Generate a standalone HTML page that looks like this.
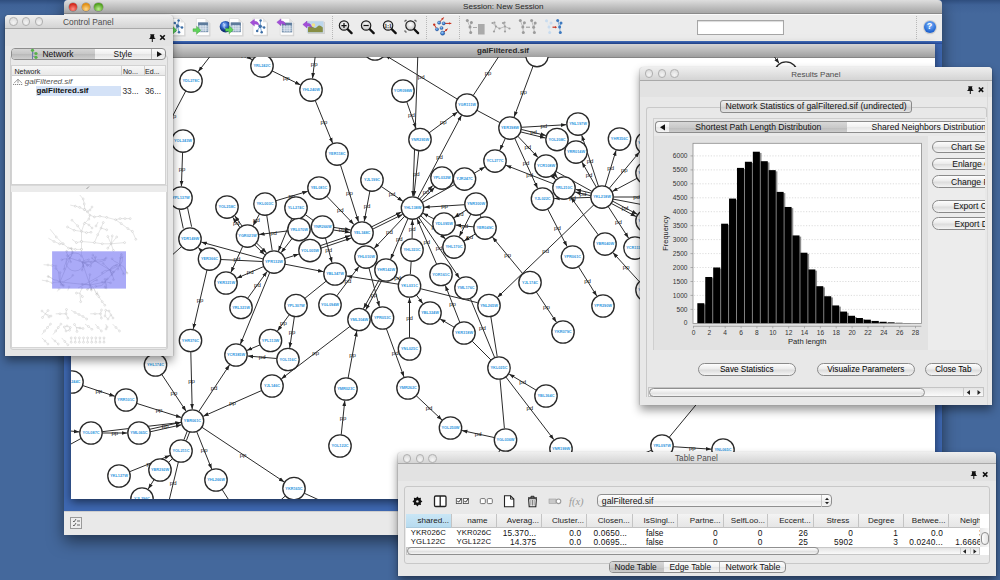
<!DOCTYPE html><html><head><meta charset="utf-8"><style>
*{margin:0;padding:0;box-sizing:border-box}
html,body{width:1000px;height:580px;overflow:hidden}
body{position:relative;font-family:"Liberation Sans",sans-serif;background:#42669b;color:#000}
.a{position:absolute}
.tx{position:absolute;white-space:nowrap;line-height:1}
.tb{background:linear-gradient(#efefef,#d4d4d4);border-bottom:1px solid #a9a9a9}
.tl{position:absolute;width:9px;height:9px;border-radius:50%;border:1px solid #b0b0b0;background:radial-gradient(circle at 50% 70%,#f4f4f4,#d6d6d6)}
.btn{position:absolute;border:1px solid #8a8a8a;border-radius:7px;background:linear-gradient(#fdfdfd,#ececec 45%,#dcdcdc 55%,#f4f4f4);white-space:nowrap;overflow:hidden;color:#111;line-height:1}
.sep{position:absolute;width:0;border-left:1px dotted #b8b8b8}
</style></head><body>
<div class="a" style="left:0;top:0;width:1000px;height:580px;background:linear-gradient(#2f4e7e 0px,#3f6297 5px,#44689c 14px,#44689c 100%)"></div>
<div class="a" style="left:64px;top:0;width:878px;height:535px;background:#3e68b2;box-shadow:0 6px 16px rgba(0,0,0,.5);border-radius:4px 4px 0 0"></div>
<div class="a" style="left:64px;top:0;width:878px;height:14px;background:linear-gradient(#dedede,#c4c4c4 45%,#a6a6a6);border-bottom:1px solid #8a8a8a;border-radius:4px 4px 0 0"></div>
<div class="a" style="left:69.0px;top:2.6px;width:8.4px;height:8.4px;border-radius:50%;background:radial-gradient(circle at 50% 75%,#ff8f85,#d2281c 70%);box-shadow:0 0 0 .5px rgba(0,0,0,.35)"></div>
<div class="a" style="left:81.8px;top:2.6px;width:8.4px;height:8.4px;border-radius:50%;background:radial-gradient(circle at 50% 75%,#ffd98a,#e08d12 70%);box-shadow:0 0 0 .5px rgba(0,0,0,.35)"></div>
<div class="a" style="left:94.3px;top:2.6px;width:8.4px;height:8.4px;border-radius:50%;background:radial-gradient(circle at 50% 75%,#bdf08f,#4f9e1e 70%);box-shadow:0 0 0 .5px rgba(0,0,0,.35)"></div>
<div class="tx" style="left:463px;top:3px;font-size:8.1px;color:#262626;font-weight:normal;">Session: New Session</div>
<div class="a" style="left:64px;top:14px;width:878px;height:27px;background:#ececec;border-top:1px solid #fafafa;border-bottom:1px solid #f7f5ee"></div>
<div class="a" style="left:64px;top:41px;width:878px;height:2.5px;background:linear-gradient(#4674c4,#24489a)"></div>
<div class="a" style="left:64px;top:511px;width:878px;height:24px;background:#e9e9e9;border-top:1px solid #d0d0d0"></div>
<div class="a" style="left:70px;top:517px;width:12px;height:12px;border:1px solid #9a9a9a;background:#eee"></div>
<svg class="a" style="left:70px;top:517px" width="12" height="12"><path d="M3 4l1 1 2-3M7 4h3M3 8l1 1 2-3M7 8h3" stroke="#444" stroke-width=".8" fill="none"/></svg>
<div class="sep" style="left:331.5px;top:16px;height:23px"></div>
<div class="sep" style="left:426px;top:16px;height:23px"></div>
<div class="sep" style="left:458.5px;top:16px;height:23px"></div>
<div class="sep" style="left:916px;top:16px;height:23px"></div>
<div class="a" style="left:697px;top:20px;width:87px;height:15px;background:#fff;border:1px solid #a6a6a6;box-shadow:inset 0 1px 1px rgba(0,0,0,.15)"></div>
<div class="a" style="left:923.5px;top:20.5px;width:12px;height:12px;border-radius:50%;background:radial-gradient(circle at 50% 35%,#7fb8ff,#1f63d0 70%);box-shadow:0 0 0 1px #cfcfcf,0 1px 1px rgba(0,0,0,.3)"></div>
<div class="tx" style="left:926.8px;top:22.3px;font-size:9px;color:#fff;font-weight:bold;">?</div>
<svg class="a" style="left:0;top:0" width="1000" height="45"><path d="M172.5 19.5h9l4 4v13h-13z" fill="#bdbdbd" opacity=".55"/><path d="M171.5 18.5h9l4 4v13h-13z" fill="#fff" stroke="#d2d2d2" stroke-width=".6"/><path d="M180.5 18.5v4h4z" fill="#e2e2e2"/><line x1="177.6" y1="26" x2="178.6" y2="20.5" stroke="#6fa0d8" stroke-width=".9"/><line x1="177.6" y1="26" x2="174.8" y2="23" stroke="#6fa0d8" stroke-width=".9"/><line x1="177.6" y1="26" x2="182" y2="27.6" stroke="#6fa0d8" stroke-width=".9"/><line x1="177.6" y1="26" x2="175" y2="31" stroke="#6fa0d8" stroke-width=".9"/><line x1="177.6" y1="26" x2="179" y2="32.3" stroke="#6fa0d8" stroke-width=".9"/><circle cx="178.6" cy="20.5" r="1.25" fill="#3e6fa6"/><circle cx="174.8" cy="23" r="1.25" fill="#3e6fa6"/><circle cx="182" cy="27.6" r="1.25" fill="#3e6fa6"/><circle cx="175" cy="31" r="1.25" fill="#3e6fa6"/><circle cx="179" cy="32.3" r="1.25" fill="#3e6fa6"/><circle cx="177.6" cy="26" r="1.7" fill="#3e6fa6"/><path d="M169 28.8h3.6v-2.6l4.2 4-4.2 4v-2.6h-3.6z" fill="#5fd35a" stroke="#34a02d" stroke-width=".4"/><path d="M197.4 19.5h9l4 4v13h-13z" fill="#bdbdbd" opacity=".55"/><path d="M196.4 18.5h9l4 4v13h-13z" fill="#fff" stroke="#d2d2d2" stroke-width=".6"/><path d="M205.4 18.5v4h4z" fill="#e2e2e2"/><rect x="198.3" y="22.8" width="9.6" height="9" fill="#a9bdd2" stroke="#5e7c9c" stroke-width=".7"/><rect x="198.3" y="22.8" width="9.6" height="2.2" fill="#5e7c9c"/><line x1="200.7" y1="25.0" x2="200.7" y2="31.8" stroke="#eef3f8" stroke-width=".5"/><line x1="203.1" y1="25.0" x2="203.1" y2="31.8" stroke="#eef3f8" stroke-width=".5"/><line x1="205.5" y1="25.0" x2="205.5" y2="31.8" stroke="#eef3f8" stroke-width=".5"/><line x1="198.3" y1="26.7" x2="207.9" y2="26.7" stroke="#eef3f8" stroke-width=".5"/><line x1="198.3" y1="28.4" x2="207.9" y2="28.4" stroke="#eef3f8" stroke-width=".5"/><line x1="198.3" y1="30.1" x2="207.9" y2="30.1" stroke="#eef3f8" stroke-width=".5"/><path d="M193 28.8h3.6v-2.6l4.2 4-4.2 4v-2.6h-3.6z" fill="#5fd35a" stroke="#34a02d" stroke-width=".4"/><circle cx="225.5" cy="26.7" r="5.8" fill="url(#glb)"/><path d="M223 23q2 1 1 3t2 3" stroke="#d8e6ff" stroke-width=".9" fill="none" opacity=".7"/><path d="M230.5 19.5h9l4 4v13h-13z" fill="#bdbdbd" opacity=".55"/><path d="M229.5 18.5h9l4 4v13h-13z" fill="#fff" stroke="#d2d2d2" stroke-width=".6"/><path d="M238.5 18.5v4h4z" fill="#e2e2e2"/><rect x="231" y="22.8" width="9.6" height="9" fill="#a9bdd2" stroke="#5e7c9c" stroke-width=".7"/><rect x="231" y="22.8" width="9.6" height="2.2" fill="#5e7c9c"/><line x1="233.4" y1="25.0" x2="233.4" y2="31.8" stroke="#eef3f8" stroke-width=".5"/><line x1="235.8" y1="25.0" x2="235.8" y2="31.8" stroke="#eef3f8" stroke-width=".5"/><line x1="238.2" y1="25.0" x2="238.2" y2="31.8" stroke="#eef3f8" stroke-width=".5"/><line x1="231" y1="26.7" x2="240.6" y2="26.7" stroke="#eef3f8" stroke-width=".5"/><line x1="231" y1="28.4" x2="240.6" y2="28.4" stroke="#eef3f8" stroke-width=".5"/><line x1="231" y1="30.1" x2="240.6" y2="30.1" stroke="#eef3f8" stroke-width=".5"/><path d="M225.5 28.400000000000002h3.6v-2.6l4.2 4-4.2 4v-2.6h-3.6z" fill="#5fd35a" stroke="#34a02d" stroke-width=".4"/><path d="M254 19.2h10l4 4v13h-14z" fill="#bdbdbd" opacity=".55"/><path d="M253 18.2h10l4 4v13h-14z" fill="#fff" stroke="#d2d2d2" stroke-width=".6"/><path d="M263 18.2v4h4z" fill="#e2e2e2"/><line x1="260.2" y1="26.2" x2="260.6" y2="20.4" stroke="#6fa0d8" stroke-width=".9"/><line x1="260.2" y1="26.2" x2="264.1" y2="27.6" stroke="#6fa0d8" stroke-width=".9"/><line x1="260.2" y1="26.2" x2="257.2" y2="31" stroke="#6fa0d8" stroke-width=".9"/><line x1="260.2" y1="26.2" x2="261.7" y2="32.3" stroke="#6fa0d8" stroke-width=".9"/><circle cx="260.6" cy="20.4" r="1.25" fill="#3e6fa6"/><circle cx="264.1" cy="27.6" r="1.25" fill="#3e6fa6"/><circle cx="257.2" cy="31" r="1.25" fill="#3e6fa6"/><circle cx="261.7" cy="32.3" r="1.25" fill="#3e6fa6"/><circle cx="260.2" cy="26.2" r="1.7" fill="#3e6fa6"/><path d="M250.2 22.6l4.2-3.4v2.1q4.2-.2 4.6 4.4q-1.4-1.9-4.6-1.6v2z" fill="#a34fd8" stroke="#8030b8" stroke-width=".35"/><path d="M281.2 19.2h9l4 4v13h-13z" fill="#bdbdbd" opacity=".55"/><path d="M280.2 18.2h9l4 4v13h-13z" fill="#fff" stroke="#d2d2d2" stroke-width=".6"/><path d="M289.2 18.2v4h4z" fill="#e2e2e2"/><rect x="282.2" y="23" width="9.6" height="9" fill="#a9bdd2" stroke="#5e7c9c" stroke-width=".7"/><rect x="282.2" y="23" width="9.6" height="2.2" fill="#5e7c9c"/><line x1="284.6" y1="25.2" x2="284.6" y2="32" stroke="#eef3f8" stroke-width=".5"/><line x1="287.0" y1="25.2" x2="287.0" y2="32" stroke="#eef3f8" stroke-width=".5"/><line x1="289.4" y1="25.2" x2="289.4" y2="32" stroke="#eef3f8" stroke-width=".5"/><line x1="282.2" y1="26.9" x2="291.8" y2="26.9" stroke="#eef3f8" stroke-width=".5"/><line x1="282.2" y1="28.6" x2="291.8" y2="28.6" stroke="#eef3f8" stroke-width=".5"/><line x1="282.2" y1="30.3" x2="291.8" y2="30.3" stroke="#eef3f8" stroke-width=".5"/><path d="M276.8 22.3l4.2-3.4v2.1q4.2-.2 4.6 4.4q-1.4-1.9-4.6-1.6v2z" fill="#a34fd8" stroke="#8030b8" stroke-width=".35"/><rect x="308" y="22" width="16.8" height="12" fill="#000" opacity=".15"/><rect x="307" y="21" width="16.8" height="12" fill="#bcd6ec" stroke="#e0e0e0" stroke-width=".6"/><path d="M308 32.2v-4.6q2.4-2.6 5-.6t4.5-.5 5.3 1v4.7z" fill="#878e45"/><circle cx="313.4" cy="25" r="1.8" fill="#f4e184"/><path d="M302.8 24.5l4.2-3.4v2.1q4.2-.2 4.6 4.4q-1.4-1.9-4.6-1.6v2z" fill="#a34fd8" stroke="#8030b8" stroke-width=".35"/><line x1="347.2" y1="28.7" x2="351.6" y2="33.1" stroke="#111" stroke-width="2.3" stroke-linecap="round"/><circle cx="344" cy="25.5" r="4.7" fill="url(#lens)" stroke="#1c1c1c" stroke-width="1.15"/><path d="M341.4 25.5h5.2M344 22.9v5.2" stroke="#111" stroke-width="1.25"/><line x1="369.3" y1="28.7" x2="373.70000000000005" y2="33.1" stroke="#111" stroke-width="2.3" stroke-linecap="round"/><circle cx="366.1" cy="25.5" r="4.7" fill="url(#lens)" stroke="#1c1c1c" stroke-width="1.15"/><path d="M363.5 25.5h5.2" stroke="#111" stroke-width="1.25"/><line x1="391.3" y1="28.7" x2="395.70000000000005" y2="33.1" stroke="#111" stroke-width="2.3" stroke-linecap="round"/><circle cx="388.1" cy="25.5" r="4.7" fill="url(#lens)" stroke="#1c1c1c" stroke-width="1.15"/><text x="388.1" y="27.5" font-size="5.3" text-anchor="middle" font-family="Liberation Serif" font-weight="bold" fill="#222">1:1</text><line x1="413.7" y1="28.7" x2="418.1" y2="33.1" stroke="#111" stroke-width="2.3" stroke-linecap="round"/><circle cx="410.5" cy="25.5" r="4.7" fill="url(#lens)" stroke="#1c1c1c" stroke-width="1.15"/><path d="M405.0 20.3h1.8M405.0 20.3v1.8M416.0 20.3h-1.8M416.0 20.3v1.8M405.0 32v-1.8M405.0 32h1.8" stroke="#333" stroke-width=".8" fill="none"/><line x1="439.1" y1="22.7" x2="443.6" y2="17.5" stroke="#c8321f" stroke-width="1"/><path d="M443.6 17.5L443.0 20.0L441.2 18.4z" fill="#c8321f"/><line x1="443.7" y1="23.4" x2="451.3" y2="23.4" stroke="#c8321f" stroke-width="1"/><path d="M451.3 23.4L449.0 24.6L449.0 22.2z" fill="#c8321f"/><line x1="442.6" y1="33.2" x2="447.5" y2="28.8" stroke="#c8321f" stroke-width="1"/><path d="M447.5 28.8L446.6 31.3L445.0 29.4z" fill="#c8321f"/><line x1="434.2" y1="24.6" x2="437" y2="29.3" stroke="#c8321f" stroke-width="1"/><circle cx="434.2" cy="24.6" r="1.2" fill="#c8321f"/><circle cx="439.1" cy="22.7" r="1.6" fill="url(#bn)" stroke="#204f8f" stroke-width=".4"/><circle cx="443.7" cy="23.4" r="1.6" fill="url(#bn)" stroke="#204f8f" stroke-width=".4"/><circle cx="437" cy="29.3" r="1.6" fill="url(#bn)" stroke="#204f8f" stroke-width=".4"/><circle cx="441.5" cy="28" r="1.6" fill="url(#bn)" stroke="#204f8f" stroke-width=".4"/><circle cx="442.6" cy="33.2" r="2.1" fill="url(#bn)" stroke="#204f8f" stroke-width=".4"/><line x1="467.3" y1="20.6" x2="470" y2="27" stroke="#b0b0b0" stroke-width=".8"/><line x1="471.4" y1="22.4" x2="470" y2="27" stroke="#b0b0b0" stroke-width=".8"/><line x1="470" y1="27" x2="470.7" y2="32.6" stroke="#b0b0b0" stroke-width=".8"/><circle cx="467.3" cy="20.6" r="1.5" fill="#9a9a9a"/><circle cx="471.4" cy="22.4" r="1.5" fill="#9a9a9a"/><circle cx="470" cy="27" r="1.5" fill="#9a9a9a"/><circle cx="470.7" cy="32.6" r="1.5" fill="#9a9a9a"/><rect x="478" y="24" width="6.6" height="10.5" fill="#aaa"/><path d="M473 27.5h4" stroke="#999" stroke-width=".8"/><line x1="492.5" y1="23" x2="496" y2="26.5" stroke="#b0b0b0" stroke-width=".8"/><line x1="494.4" y1="22.5" x2="496" y2="26.5" stroke="#b0b0b0" stroke-width=".8"/><line x1="496" y1="26.5" x2="499.5" y2="28.5" stroke="#b0b0b0" stroke-width=".8"/><line x1="496" y1="26.5" x2="494" y2="31.5" stroke="#b0b0b0" stroke-width=".8"/><line x1="503" y1="23" x2="505" y2="26.5" stroke="#b0b0b0" stroke-width=".8"/><line x1="504.5" y1="22.5" x2="505" y2="26.5" stroke="#b0b0b0" stroke-width=".8"/><line x1="505" y1="26.5" x2="509.5" y2="28.5" stroke="#b0b0b0" stroke-width=".8"/><line x1="505" y1="26.5" x2="505" y2="31.5" stroke="#b0b0b0" stroke-width=".8"/><line x1="499.5" y1="28.5" x2="505" y2="26.5" stroke="#b0b0b0" stroke-width=".8"/><circle cx="492.5" cy="23" r="1.1" fill="#a0a0a0"/><circle cx="494.4" cy="22.5" r="1.1" fill="#a0a0a0"/><circle cx="496" cy="26.5" r="1.1" fill="#a0a0a0"/><circle cx="499.5" cy="28.5" r="1.1" fill="#a0a0a0"/><circle cx="494" cy="31.5" r="1.1" fill="#a0a0a0"/><circle cx="503" cy="23" r="1.1" fill="#a0a0a0"/><circle cx="504.5" cy="22.5" r="1.1" fill="#a0a0a0"/><circle cx="505" cy="26.5" r="1.1" fill="#a0a0a0"/><circle cx="509.5" cy="28.5" r="1.1" fill="#a0a0a0"/><circle cx="505" cy="31.5" r="1.1" fill="#a0a0a0"/><line x1="520.3" y1="20.6" x2="522.8" y2="27" stroke="#b0b0b0" stroke-width=".8"/><line x1="524.4" y1="22.7" x2="522.8" y2="27" stroke="#b0b0b0" stroke-width=".8"/><line x1="522.8" y1="27" x2="523.3" y2="32.4" stroke="#b0b0b0" stroke-width=".8"/><line x1="531.6" y1="20.6" x2="533.6" y2="27.3" stroke="#b0b0b0" stroke-width=".8"/><line x1="535.2" y1="23" x2="533.6" y2="27.3" stroke="#b0b0b0" stroke-width=".8"/><line x1="533.6" y1="27.3" x2="534.4" y2="32.4" stroke="#b0b0b0" stroke-width=".8"/><circle cx="520.3" cy="20.6" r="1.5" fill="#9c9c9c"/><circle cx="524.4" cy="22.7" r="1.5" fill="#9c9c9c"/><circle cx="522.8" cy="27" r="1.5" fill="#9c9c9c"/><circle cx="523.3" cy="32.4" r="1.5" fill="#9c9c9c"/><circle cx="531.6" cy="20.6" r="1.5" fill="#9c9c9c"/><circle cx="535.2" cy="23" r="1.5" fill="#9c9c9c"/><circle cx="533.6" cy="27.3" r="1.5" fill="#9c9c9c"/><circle cx="534.4" cy="32.4" r="1.5" fill="#9c9c9c"/><path d="M526 27.2h4" stroke="#888" stroke-width=".9"/><line x1="546.5" y1="20.7" x2="549" y2="27" stroke="#dde8f3" stroke-width=".8"/><line x1="551" y1="23" x2="549" y2="27" stroke="#dde8f3" stroke-width=".8"/><line x1="549" y1="27" x2="549.7" y2="32.5" stroke="#dde8f3" stroke-width=".8"/><circle cx="546.5" cy="20.7" r="1.5" fill="#c9dcef"/><circle cx="551" cy="23" r="1.5" fill="#c9dcef"/><circle cx="549" cy="27" r="1.5" fill="#c9dcef"/><circle cx="549.7" cy="32.5" r="1.5" fill="#c9dcef"/><line x1="557.7" y1="20.4" x2="559.6" y2="27" stroke="#6f9fd6" stroke-width=".8"/><line x1="561" y1="23" x2="559.6" y2="27" stroke="#6f9fd6" stroke-width=".8"/><line x1="559.6" y1="27" x2="560.3" y2="32.6" stroke="#6f9fd6" stroke-width=".8"/><circle cx="557.7" cy="20.4" r="1.5" fill="#3d79bf"/><circle cx="561" cy="23" r="1.5" fill="#3d79bf"/><circle cx="559.6" cy="27" r="1.5" fill="#3d79bf"/><circle cx="560.3" cy="32.6" r="1.5" fill="#3d79bf"/><path d="M552.5 27.2h3.5" stroke="#c8321f" stroke-width="1.2"/><path d="M557 27.2l-1.8-1.3v2.6z" fill="#c8321f"/><defs><radialGradient id="glb" cx="40%" cy="35%"><stop offset="0" stop-color="#b6d4ff"/><stop offset=".5" stop-color="#3a6fd0"/><stop offset="1" stop-color="#102f7a"/></radialGradient><radialGradient id="lens" cx="50%" cy="40%"><stop offset="0" stop-color="#fff"/><stop offset="1" stop-color="#cdcdcd"/></radialGradient><radialGradient id="bn" cx="40%" cy="35%"><stop offset="0" stop-color="#9fd0ff"/><stop offset="1" stop-color="#2d6cc0"/></radialGradient></defs></svg>
<div class="a" style="left:71px;top:44px;width:864px;height:455px;background:#fff;box-shadow:0 3px 9px rgba(0,0,0,.55)"></div>
<div class="a" style="left:71px;top:44px;width:864px;height:13.5px;background:linear-gradient(#d4d4d4,#bababa 50%,#9f9f9f);border-bottom:1px solid #858585"></div>
<div class="tx" style="left:477px;top:46.6px;font-size:8px;color:#2a2a2a;font-weight:bold;">galFiltered.sif</div>
<svg class="a" style="left:71px;top:57px" width="864" height="442" viewBox="71 57 864 442"><defs><marker id="ar" viewBox="0 0 10 10" refX="10" refY="5" markerWidth="5.5" markerHeight="5.5" orient="auto"><path d="M0 1.5L10 5 0 8.5z" fill="#222"/></marker></defs><line x1="215.0" y1="50.0" x2="198.2" y2="71.7" stroke="#2b2b2b" stroke-width="1" marker-end="url(#ar)"/><line x1="237.0" y1="50.0" x2="252.1" y2="59.7" stroke="#2b2b2b" stroke-width="1" marker-end="url(#ar)"/><line x1="272.1" y1="70.9" x2="300.5" y2="84.9" stroke="#2b2b2b" stroke-width="1" marker-end="url(#ar)"/><line x1="316.0" y1="50.0" x2="312.5" y2="78.4" stroke="#2b2b2b" stroke-width="1" marker-end="url(#ar)"/><line x1="185.8" y1="90.9" x2="160.0" y2="140.0" stroke="#2b2b2b" stroke-width="1"/><line x1="182.6" y1="152.2" x2="181.4" y2="186.3" stroke="#2b2b2b" stroke-width="1" marker-end="url(#ar)"/><line x1="315.2" y1="100.4" x2="332.6" y2="143.2" stroke="#2b2b2b" stroke-width="1" marker-end="url(#ar)"/><line x1="340.4" y1="164.7" x2="358.5" y2="221.8" stroke="#2b2b2b" stroke-width="1" marker-end="url(#ar)"/><line x1="406.7" y1="101.6" x2="416.1" y2="128.5" stroke="#2b2b2b" stroke-width="1" marker-end="url(#ar)"/><line x1="369.9" y1="191.0" x2="364.2" y2="221.5" stroke="#2b2b2b" stroke-width="1" marker-end="url(#ar)"/><line x1="418.0" y1="50.0" x2="412.9" y2="196.3" stroke="#2b2b2b" stroke-width="1" marker-end="url(#ar)"/><line x1="457.4" y1="99.2" x2="385.0" y2="55.1" stroke="#2b2b2b" stroke-width="1" marker-end="url(#ar)"/><line x1="381.2" y1="186.4" x2="402.9" y2="201.3" stroke="#2b2b2b" stroke-width="1" marker-end="url(#ar)"/><line x1="275.7" y1="200.8" x2="307.8" y2="191.3" stroke="#2b2b2b" stroke-width="1" marker-end="url(#ar)"/><line x1="326.7" y1="196.1" x2="353.9" y2="224.5" stroke="#2b2b2b" stroke-width="1" marker-end="url(#ar)"/><line x1="533.1" y1="66.0" x2="514.1" y2="117.0" stroke="#2b2b2b" stroke-width="1" marker-end="url(#ar)"/><line x1="473.1" y1="95.6" x2="503.0" y2="50.0" stroke="#2b2b2b" stroke-width="1"/><line x1="429.0" y1="132.9" x2="457.6" y2="111.9" stroke="#2b2b2b" stroke-width="1" marker-end="url(#ar)"/><line x1="476.9" y1="110.3" x2="499.7" y2="122.5" stroke="#2b2b2b" stroke-width="1"/><line x1="521.2" y1="127.3" x2="566.3" y2="124.7" stroke="#2b2b2b" stroke-width="1" marker-end="url(#ar)"/><line x1="521.2" y1="129.4" x2="545.9" y2="135.5" stroke="#2b2b2b" stroke-width="1" marker-end="url(#ar)"/><line x1="520.6" y1="131.9" x2="545.3" y2="138.0" stroke="#2b2b2b" stroke-width="1" marker-end="url(#ar)"/><line x1="505.4" y1="138.2" x2="499.8" y2="150.3" stroke="#2b2b2b" stroke-width="1" marker-end="url(#ar)"/><line x1="517.7" y1="136.1" x2="538.0" y2="157.5" stroke="#2b2b2b" stroke-width="1" marker-end="url(#ar)"/><line x1="514.7" y1="138.2" x2="537.6" y2="188.4" stroke="#2b2b2b" stroke-width="1" marker-end="url(#ar)"/><line x1="474.1" y1="173.3" x2="484.9" y2="166.9" stroke="#2b2b2b" stroke-width="1" marker-end="url(#ar)"/><line x1="553.6" y1="183.9" x2="505.9" y2="165.3" stroke="#2b2b2b" stroke-width="1" marker-end="url(#ar)"/><line x1="417.7" y1="198.1" x2="461.5" y2="115.3" stroke="#2b2b2b" stroke-width="1" marker-end="url(#ar)"/><line x1="596.4" y1="187.3" x2="581.9" y2="162.1" stroke="#2b2b2b" stroke-width="1" marker-end="url(#ar)"/><line x1="598.5" y1="186.4" x2="581.7" y2="135.1" stroke="#2b2b2b" stroke-width="1" marker-end="url(#ar)"/><line x1="605.2" y1="186.3" x2="616.1" y2="150.2" stroke="#2b2b2b" stroke-width="1" marker-end="url(#ar)"/><line x1="609.2" y1="188.4" x2="639.5" y2="152.0" stroke="#2b2b2b" stroke-width="1" marker-end="url(#ar)"/><line x1="637.1" y1="178.3" x2="612.3" y2="191.5" stroke="#2b2b2b" stroke-width="1" marker-end="url(#ar)"/><line x1="613.2" y1="197.0" x2="660.0" y2="197.0" stroke="#2b2b2b" stroke-width="1"/><line x1="612.5" y1="201.1" x2="637.3" y2="214.3" stroke="#2b2b2b" stroke-width="1" marker-end="url(#ar)"/><line x1="611.3" y1="203.4" x2="636.1" y2="216.6" stroke="#2b2b2b" stroke-width="1" marker-end="url(#ar)"/><line x1="590.8" y1="197.4" x2="554.2" y2="198.6" stroke="#2b2b2b" stroke-width="1" marker-end="url(#ar)"/><line x1="613.0" y1="199.1" x2="660.0" y2="208.0" stroke="#2b2b2b" stroke-width="1"/><line x1="554.1" y1="173.8" x2="557.6" y2="178.1" stroke="#2b2b2b" stroke-width="1" marker-end="url(#ar)"/><line x1="552.1" y1="175.5" x2="555.6" y2="179.8" stroke="#2b2b2b" stroke-width="1" marker-end="url(#ar)"/><line x1="590.8" y1="195.7" x2="575.1" y2="192.0" stroke="#2b2b2b" stroke-width="1" marker-end="url(#ar)"/><line x1="591.4" y1="193.2" x2="575.7" y2="189.4" stroke="#2b2b2b" stroke-width="1" marker-end="url(#ar)"/><line x1="555.8" y1="171.4" x2="591.8" y2="191.3" stroke="#2b2b2b" stroke-width="1"/><line x1="418.8" y1="150.6" x2="413.8" y2="196.4" stroke="#2b2b2b" stroke-width="1" marker-end="url(#ar)"/><line x1="419.4" y1="199.1" x2="432.9" y2="185.4" stroke="#2b2b2b" stroke-width="1" marker-end="url(#ar)"/><line x1="421.3" y1="200.9" x2="434.7" y2="187.3" stroke="#2b2b2b" stroke-width="1" marker-end="url(#ar)"/><line x1="422.3" y1="202.5" x2="454.3" y2="184.7" stroke="#2b2b2b" stroke-width="1"/><line x1="187.6" y1="208.0" x2="191.6" y2="226.7" stroke="#2b2b2b" stroke-width="1"/><line x1="179.3" y1="209.9" x2="183.3" y2="228.5" stroke="#2b2b2b" stroke-width="1"/><line x1="181.7" y1="246.5" x2="150.0" y2="275.0" stroke="#2b2b2b" stroke-width="1"/><line x1="263.2" y1="259.0" x2="201.3" y2="242.1" stroke="#2b2b2b" stroke-width="1" marker-end="url(#ar)"/><line x1="201.7" y1="251.0" x2="198.2" y2="247.4" stroke="#2b2b2b" stroke-width="1" marker-end="url(#ar)"/><line x1="220.7" y1="259.5" x2="262.3" y2="261.5" stroke="#2b2b2b" stroke-width="1"/><line x1="207.0" y1="269.9" x2="193.2" y2="329.1" stroke="#2b2b2b" stroke-width="1" marker-end="url(#ar)"/><line x1="240.0" y1="227.6" x2="232.7" y2="217.3" stroke="#2b2b2b" stroke-width="1" marker-end="url(#ar)"/><line x1="242.1" y1="226.1" x2="234.8" y2="215.8" stroke="#2b2b2b" stroke-width="1" marker-end="url(#ar)"/><line x1="266.7" y1="215.1" x2="272.2" y2="250.4" stroke="#2b2b2b" stroke-width="1"/><line x1="305.1" y1="214.5" x2="313.0" y2="220.2" stroke="#2b2b2b" stroke-width="1"/><line x1="287.9" y1="230.9" x2="259.1" y2="234.5" stroke="#2b2b2b" stroke-width="1" marker-end="url(#ar)"/><line x1="242.8" y1="246.2" x2="230.9" y2="272.4" stroke="#2b2b2b" stroke-width="1" marker-end="url(#ar)"/><line x1="256.4" y1="242.9" x2="266.6" y2="252.9" stroke="#2b2b2b" stroke-width="1" marker-end="url(#ar)"/><line x1="254.6" y1="244.8" x2="264.7" y2="254.7" stroke="#2b2b2b" stroke-width="1" marker-end="url(#ar)"/><line x1="259.6" y1="213.8" x2="253.1" y2="225.7" stroke="#2b2b2b" stroke-width="1" marker-end="url(#ar)"/><line x1="291.8" y1="218.4" x2="278.4" y2="251.2" stroke="#2b2b2b" stroke-width="1" marker-end="url(#ar)"/><line x1="292.2" y1="238.4" x2="281.1" y2="252.7" stroke="#2b2b2b" stroke-width="1" marker-end="url(#ar)"/><line x1="333.8" y1="227.4" x2="350.6" y2="230.0" stroke="#2b2b2b" stroke-width="1" marker-end="url(#ar)"/><line x1="333.4" y1="230.0" x2="350.2" y2="232.5" stroke="#2b2b2b" stroke-width="1" marker-end="url(#ar)"/><line x1="325.4" y1="237.8" x2="332.0" y2="262.7" stroke="#2b2b2b" stroke-width="1" marker-end="url(#ar)"/><line x1="320.2" y1="245.7" x2="350.5" y2="235.5" stroke="#2b2b2b" stroke-width="1" marker-end="url(#ar)"/><line x1="321.0" y1="248.2" x2="351.3" y2="238.0" stroke="#2b2b2b" stroke-width="1" marker-end="url(#ar)"/><line x1="284.7" y1="258.6" x2="298.9" y2="254.1" stroke="#2b2b2b" stroke-width="1" marker-end="url(#ar)"/><line x1="285.0" y1="264.2" x2="323.5" y2="271.7" stroke="#2b2b2b" stroke-width="1" marker-end="url(#ar)"/><line x1="263.7" y1="266.5" x2="236.7" y2="278.3" stroke="#2b2b2b" stroke-width="1" marker-end="url(#ar)"/><line x1="247.6" y1="298.4" x2="267.1" y2="271.5" stroke="#2b2b2b" stroke-width="1" marker-end="url(#ar)"/><line x1="269.8" y1="272.4" x2="240.4" y2="344.2" stroke="#2b2b2b" stroke-width="1" marker-end="url(#ar)"/><line x1="371.5" y1="226.9" x2="401.4" y2="212.0" stroke="#2b2b2b" stroke-width="1" marker-end="url(#ar)"/><line x1="372.6" y1="229.2" x2="402.6" y2="214.4" stroke="#2b2b2b" stroke-width="1" marker-end="url(#ar)"/><line x1="336.7" y1="296.0" x2="359.0" y2="266.4" stroke="#2b2b2b" stroke-width="1" marker-end="url(#ar)"/><line x1="408.1" y1="218.3" x2="390.6" y2="259.2" stroke="#2b2b2b" stroke-width="1" marker-end="url(#ar)"/><line x1="412.1" y1="238.8" x2="412.4" y2="219.7" stroke="#2b2b2b" stroke-width="1" marker-end="url(#ar)"/><line x1="404.8" y1="216.1" x2="374.1" y2="248.5" stroke="#2b2b2b" stroke-width="1" marker-end="url(#ar)"/><line x1="395.3" y1="276.3" x2="399.8" y2="279.4" stroke="#2b2b2b" stroke-width="1"/><line x1="398.4" y1="284.2" x2="346.6" y2="275.9" stroke="#2b2b2b" stroke-width="1" marker-end="url(#ar)"/><line x1="381.8" y1="280.5" x2="365.7" y2="309.9" stroke="#2b2b2b" stroke-width="1" marker-end="url(#ar)"/><line x1="379.5" y1="279.2" x2="363.5" y2="308.6" stroke="#2b2b2b" stroke-width="1" marker-end="url(#ar)"/><line x1="368.9" y1="267.8" x2="379.4" y2="306.7" stroke="#2b2b2b" stroke-width="1" marker-end="url(#ar)"/><line x1="326.3" y1="281.0" x2="305.1" y2="298.1" stroke="#2b2b2b" stroke-width="1"/><line x1="411.2" y1="261.2" x2="410.3" y2="274.3" stroke="#2b2b2b" stroke-width="1"/><line x1="409.5" y1="337.8" x2="409.5" y2="297.7" stroke="#2b2b2b" stroke-width="1" marker-end="url(#ar)"/><line x1="289.4" y1="314.6" x2="277.4" y2="331.0" stroke="#2b2b2b" stroke-width="1" marker-end="url(#ar)"/><line x1="464.8" y1="204.7" x2="424.2" y2="207.3" stroke="#2b2b2b" stroke-width="1" marker-end="url(#ar)"/><line x1="466.5" y1="209.9" x2="453.9" y2="217.8" stroke="#2b2b2b" stroke-width="1" marker-end="url(#ar)"/><line x1="470.9" y1="214.0" x2="459.3" y2="236.6" stroke="#2b2b2b" stroke-width="1" marker-end="url(#ar)"/><line x1="479.9" y1="214.5" x2="480.9" y2="217.0" stroke="#2b2b2b" stroke-width="1"/><line x1="473.9" y1="226.9" x2="455.6" y2="225.1" stroke="#2b2b2b" stroke-width="1" marker-end="url(#ar)"/><line x1="475.5" y1="233.9" x2="464.0" y2="240.9" stroke="#2b2b2b" stroke-width="1" marker-end="url(#ar)"/><line x1="434.0" y1="218.9" x2="422.9" y2="213.3" stroke="#2b2b2b" stroke-width="1" marker-end="url(#ar)"/><line x1="420.7" y1="215.7" x2="445.5" y2="239.0" stroke="#2b2b2b" stroke-width="1" marker-end="url(#ar)"/><line x1="418.7" y1="217.3" x2="459.5" y2="278.3" stroke="#2b2b2b" stroke-width="1" marker-end="url(#ar)"/><line x1="436.6" y1="264.2" x2="417.1" y2="218.8" stroke="#2b2b2b" stroke-width="1" marker-end="url(#ar)"/><line x1="522.9" y1="273.9" x2="492.4" y2="237.0" stroke="#2b2b2b" stroke-width="1" marker-end="url(#ar)"/><line x1="593.9" y1="204.8" x2="497.4" y2="297.4" stroke="#2b2b2b" stroke-width="1" marker-end="url(#ar)"/><line x1="547.6" y1="208.9" x2="567.1" y2="246.6" stroke="#2b2b2b" stroke-width="1" marker-end="url(#ar)"/><line x1="598.4" y1="235.0" x2="570.9" y2="197.4" stroke="#2b2b2b" stroke-width="1" marker-end="url(#ar)"/><line x1="608.1" y1="206.4" x2="628.6" y2="238.2" stroke="#2b2b2b" stroke-width="1" marker-end="url(#ar)"/><line x1="578.4" y1="266.5" x2="596.8" y2="296.1" stroke="#2b2b2b" stroke-width="1" marker-end="url(#ar)"/><line x1="536.2" y1="291.8" x2="556.5" y2="322.3" stroke="#2b2b2b" stroke-width="1" marker-end="url(#ar)"/><line x1="639.4" y1="281.7" x2="612.9" y2="252.6" stroke="#2b2b2b" stroke-width="1" marker-end="url(#ar)"/><line x1="416.3" y1="294.9" x2="422.9" y2="303.7" stroke="#2b2b2b" stroke-width="1" marker-end="url(#ar)"/><line x1="420.4" y1="288.7" x2="477.6" y2="302.7" stroke="#2b2b2b" stroke-width="1"/><line x1="459.9" y1="322.6" x2="445.3" y2="285.4" stroke="#2b2b2b" stroke-width="1" marker-end="url(#ar)"/><line x1="470.3" y1="298.4" x2="494.5" y2="357.2" stroke="#2b2b2b" stroke-width="1"/><line x1="490.8" y1="316.6" x2="497.2" y2="356.4" stroke="#2b2b2b" stroke-width="1"/><line x1="454.3" y1="327.3" x2="440.1" y2="318.9" stroke="#2b2b2b" stroke-width="1" marker-end="url(#ar)"/><line x1="491.1" y1="360.1" x2="472.3" y2="341.3" stroke="#2b2b2b" stroke-width="1"/><line x1="536.4" y1="390.3" x2="509.1" y2="374.0" stroke="#2b2b2b" stroke-width="1" marker-end="url(#ar)"/><line x1="505.8" y1="376.9" x2="553.9" y2="439.7" stroke="#2b2b2b" stroke-width="1" marker-end="url(#ar)"/><line x1="500.0" y1="379.2" x2="504.4" y2="428.3" stroke="#2b2b2b" stroke-width="1"/><line x1="494.6" y1="437.6" x2="461.9" y2="430.5" stroke="#2b2b2b" stroke-width="1" marker-end="url(#ar)"/><line x1="416.2" y1="395.7" x2="442.0" y2="420.0" stroke="#2b2b2b" stroke-width="1" marker-end="url(#ar)"/><line x1="386.3" y1="328.5" x2="404.0" y2="377.0" stroke="#2b2b2b" stroke-width="1" marker-end="url(#ar)"/><line x1="500.1" y1="449.8" x2="470.0" y2="505.0" stroke="#2b2b2b" stroke-width="1"/><line x1="507.9" y1="450.9" x2="520.0" y2="505.0" stroke="#2b2b2b" stroke-width="1"/><line x1="190.8" y1="351.7" x2="192.2" y2="409.3" stroke="#2b2b2b" stroke-width="1" marker-end="url(#ar)"/><line x1="198.7" y1="411.6" x2="229.6" y2="364.8" stroke="#2b2b2b" stroke-width="1" marker-end="url(#ar)"/><line x1="261.7" y1="390.5" x2="203.2" y2="416.3" stroke="#2b2b2b" stroke-width="1" marker-end="url(#ar)"/><line x1="276.8" y1="358.5" x2="247.7" y2="356.0" stroke="#2b2b2b" stroke-width="1" marker-end="url(#ar)"/><line x1="260.2" y1="344.8" x2="246.8" y2="350.5" stroke="#2b2b2b" stroke-width="1" marker-end="url(#ar)"/><line x1="294.4" y1="316.6" x2="289.7" y2="347.9" stroke="#2b2b2b" stroke-width="1" marker-end="url(#ar)"/><line x1="350.1" y1="326.3" x2="281.3" y2="378.9" stroke="#2b2b2b" stroke-width="1" marker-end="url(#ar)"/><line x1="341.2" y1="434.9" x2="344.8" y2="400.6" stroke="#2b2b2b" stroke-width="1" marker-end="url(#ar)"/><line x1="348.1" y1="378.0" x2="356.8" y2="331.0" stroke="#2b2b2b" stroke-width="1" marker-end="url(#ar)"/><line x1="161.7" y1="374.3" x2="186.1" y2="411.2" stroke="#2b2b2b" stroke-width="1" marker-end="url(#ar)"/><line x1="82.6" y1="385.5" x2="114.9" y2="396.3" stroke="#2b2b2b" stroke-width="1" marker-end="url(#ar)"/><line x1="136.7" y1="403.4" x2="181.3" y2="417.5" stroke="#2b2b2b" stroke-width="1" marker-end="url(#ar)"/><line x1="102.2" y1="433.0" x2="127.3" y2="433.0" stroke="#2b2b2b" stroke-width="1" marker-end="url(#ar)"/><line x1="149.6" y1="429.3" x2="180.8" y2="422.3" stroke="#2b2b2b" stroke-width="1" marker-end="url(#ar)"/><line x1="150.2" y1="431.8" x2="181.4" y2="424.8" stroke="#2b2b2b" stroke-width="1" marker-end="url(#ar)"/><line x1="102.1" y1="431.7" x2="180.9" y2="422.4" stroke="#2b2b2b" stroke-width="1" marker-end="url(#ar)"/><line x1="60.0" y1="430.0" x2="79.4" y2="431.9" stroke="#2b2b2b" stroke-width="1" marker-end="url(#ar)"/><line x1="81.2" y1="438.4" x2="60.0" y2="450.0" stroke="#2b2b2b" stroke-width="1"/><line x1="189.7" y1="431.9" x2="186.4" y2="440.5" stroke="#2b2b2b" stroke-width="1"/><line x1="187.3" y1="431.0" x2="184.0" y2="439.6" stroke="#2b2b2b" stroke-width="1"/><line x1="172.7" y1="458.5" x2="168.7" y2="462.2" stroke="#2b2b2b" stroke-width="1"/><line x1="129.4" y1="471.8" x2="170.1" y2="455.4" stroke="#2b2b2b" stroke-width="1" marker-end="url(#ar)"/><line x1="154.1" y1="479.5" x2="148.2" y2="489.1" stroke="#2b2b2b" stroke-width="1" marker-end="url(#ar)"/><line x1="178.4" y1="461.9" x2="168.0" y2="505.0" stroke="#2b2b2b" stroke-width="1"/><line x1="196.6" y1="431.4" x2="211.7" y2="469.1" stroke="#2b2b2b" stroke-width="1" marker-end="url(#ar)"/><line x1="201.8" y1="427.2" x2="284.3" y2="482.0" stroke="#2b2b2b" stroke-width="1" marker-end="url(#ar)"/><line x1="222.0" y1="489.4" x2="232.0" y2="505.0" stroke="#2b2b2b" stroke-width="1"/><line x1="285.5" y1="495.8" x2="275.0" y2="505.0" stroke="#2b2b2b" stroke-width="1"/><line x1="304.2" y1="493.2" x2="330.0" y2="505.0" stroke="#2b2b2b" stroke-width="1"/><line x1="669.1" y1="437.4" x2="700.0" y2="400.0" stroke="#2b2b2b" stroke-width="1" marker-end="url(#ar)"/><line x1="768.0" y1="48.0" x2="779.2" y2="63.5" stroke="#2b2b2b" stroke-width="1" marker-end="url(#ar)"/><line x1="673.2" y1="446.7" x2="711.3" y2="449.2" stroke="#2b2b2b" stroke-width="1" marker-end="url(#ar)"/><line x1="651.6" y1="450.2" x2="640.0" y2="455.0" stroke="#2b2b2b" stroke-width="1"/><text x="244.6" y="56.8" font-size="6" font-family="Liberation Sans" text-anchor="middle" fill="#1a1a1a">pp</text><text x="286.3" y="79.9" font-size="6" font-family="Liberation Sans" text-anchor="middle" fill="#1a1a1a">pp</text><text x="314.2" y="66.2" font-size="6" font-family="Liberation Sans" text-anchor="middle" fill="#1a1a1a">pp</text><text x="172.9" y="117.5" font-size="6" font-family="Liberation Sans" text-anchor="middle" fill="#1a1a1a">pp</text><text x="182.0" y="171.3" font-size="6" font-family="Liberation Sans" text-anchor="middle" fill="#1a1a1a">pp</text><text x="323.9" y="123.8" font-size="6" font-family="Liberation Sans" text-anchor="middle" fill="#1a1a1a">pp</text><text x="349.4" y="195.3" font-size="6" font-family="Liberation Sans" text-anchor="middle" fill="#1a1a1a">pp</text><text x="411.4" y="117.0" font-size="6" font-family="Liberation Sans" text-anchor="middle" fill="#1a1a1a">pd</text><text x="367.0" y="208.3" font-size="6" font-family="Liberation Sans" text-anchor="middle" fill="#1a1a1a">pd</text><text x="421.2" y="79.1" font-size="6" font-family="Liberation Sans" text-anchor="middle" fill="#1a1a1a">pd</text><text x="392.0" y="195.9" font-size="6" font-family="Liberation Sans" text-anchor="middle" fill="#1a1a1a">pd</text><text x="291.8" y="198.1" font-size="6" font-family="Liberation Sans" text-anchor="middle" fill="#1a1a1a">pp</text><text x="340.3" y="212.3" font-size="6" font-family="Liberation Sans" text-anchor="middle" fill="#1a1a1a">pd</text><text x="523.6" y="93.5" font-size="6" font-family="Liberation Sans" text-anchor="middle" fill="#1a1a1a">pp</text><text x="488.1" y="74.8" font-size="6" font-family="Liberation Sans" text-anchor="middle" fill="#1a1a1a">pp</text><text x="443.3" y="124.4" font-size="6" font-family="Liberation Sans" text-anchor="middle" fill="#1a1a1a">pp</text><text x="543.8" y="128.0" font-size="6" font-family="Liberation Sans" text-anchor="middle" fill="#1a1a1a">pd</text><text x="533.6" y="134.4" font-size="6" font-family="Liberation Sans" text-anchor="middle" fill="#1a1a1a">pd</text><text x="527.8" y="148.8" font-size="6" font-family="Liberation Sans" text-anchor="middle" fill="#1a1a1a">pd</text><text x="526.1" y="165.3" font-size="6" font-family="Liberation Sans" text-anchor="middle" fill="#1a1a1a">pd</text><text x="529.7" y="176.6" font-size="6" font-family="Liberation Sans" text-anchor="middle" fill="#1a1a1a">pd</text><text x="439.6" y="158.7" font-size="6" font-family="Liberation Sans" text-anchor="middle" fill="#1a1a1a">pd</text><text x="589.1" y="176.7" font-size="6" font-family="Liberation Sans" text-anchor="middle" fill="#1a1a1a">pd</text><text x="590.1" y="162.7" font-size="6" font-family="Liberation Sans" text-anchor="middle" fill="#1a1a1a">pd</text><text x="610.7" y="170.2" font-size="6" font-family="Liberation Sans" text-anchor="middle" fill="#1a1a1a">pd</text><text x="624.3" y="172.2" font-size="6" font-family="Liberation Sans" text-anchor="middle" fill="#1a1a1a">pp</text><text x="636.6" y="199.0" font-size="6" font-family="Liberation Sans" text-anchor="middle" fill="#1a1a1a">pd</text><text x="624.9" y="209.7" font-size="6" font-family="Liberation Sans" text-anchor="middle" fill="#1a1a1a">pd</text><text x="572.5" y="200.0" font-size="6" font-family="Liberation Sans" text-anchor="middle" fill="#1a1a1a">pd</text><text x="582.9" y="195.8" font-size="6" font-family="Liberation Sans" text-anchor="middle" fill="#1a1a1a">pd</text><text x="416.3" y="175.5" font-size="6" font-family="Liberation Sans" text-anchor="middle" fill="#1a1a1a">pd</text><text x="426.1" y="194.3" font-size="6" font-family="Liberation Sans" text-anchor="middle" fill="#1a1a1a">pd</text><text x="165.8" y="262.7" font-size="6" font-family="Liberation Sans" text-anchor="middle" fill="#1a1a1a">p</text><text x="200.1" y="301.5" font-size="6" font-family="Liberation Sans" text-anchor="middle" fill="#1a1a1a">pp</text><text x="236.3" y="224.5" font-size="6" font-family="Liberation Sans" text-anchor="middle" fill="#1a1a1a">pd</text><text x="273.5" y="234.7" font-size="6" font-family="Liberation Sans" text-anchor="middle" fill="#1a1a1a">pd</text><text x="236.9" y="261.3" font-size="6" font-family="Liberation Sans" text-anchor="middle" fill="#1a1a1a">pd</text><text x="256.4" y="221.8" font-size="6" font-family="Liberation Sans" text-anchor="middle" fill="#1a1a1a">pd</text><text x="342.2" y="230.7" font-size="6" font-family="Liberation Sans" text-anchor="middle" fill="#1a1a1a">pp</text><text x="328.7" y="252.3" font-size="6" font-family="Liberation Sans" text-anchor="middle" fill="#1a1a1a">pd</text><text x="250.2" y="274.4" font-size="6" font-family="Liberation Sans" text-anchor="middle" fill="#1a1a1a">pd</text><text x="257.4" y="287.0" font-size="6" font-family="Liberation Sans" text-anchor="middle" fill="#1a1a1a">pd</text><text x="347.9" y="283.2" font-size="6" font-family="Liberation Sans" text-anchor="middle" fill="#1a1a1a">pd</text><text x="399.3" y="240.8" font-size="6" font-family="Liberation Sans" text-anchor="middle" fill="#1a1a1a">pd</text><text x="412.2" y="231.2" font-size="6" font-family="Liberation Sans" text-anchor="middle" fill="#1a1a1a">pd</text><text x="389.4" y="234.3" font-size="6" font-family="Liberation Sans" text-anchor="middle" fill="#1a1a1a">pd</text><text x="397.5" y="279.9" font-size="6" font-family="Liberation Sans" text-anchor="middle" fill="#1a1a1a">pd</text><text x="373.8" y="297.2" font-size="6" font-family="Liberation Sans" text-anchor="middle" fill="#1a1a1a">pp</text><text x="409.5" y="319.8" font-size="6" font-family="Liberation Sans" text-anchor="middle" fill="#1a1a1a">pd</text><text x="283.4" y="324.8" font-size="6" font-family="Liberation Sans" text-anchor="middle" fill="#1a1a1a">pp</text><text x="444.5" y="208.0" font-size="6" font-family="Liberation Sans" text-anchor="middle" fill="#1a1a1a">pp</text><text x="460.2" y="215.9" font-size="6" font-family="Liberation Sans" text-anchor="middle" fill="#1a1a1a">pd</text><text x="464.7" y="228.0" font-size="6" font-family="Liberation Sans" text-anchor="middle" fill="#1a1a1a">pd</text><text x="469.7" y="239.4" font-size="6" font-family="Liberation Sans" text-anchor="middle" fill="#1a1a1a">pd</text><text x="433.1" y="229.3" font-size="6" font-family="Liberation Sans" text-anchor="middle" fill="#1a1a1a">p</text><text x="439.1" y="249.8" font-size="6" font-family="Liberation Sans" text-anchor="middle" fill="#1a1a1a">pd</text><text x="426.8" y="243.5" font-size="6" font-family="Liberation Sans" text-anchor="middle" fill="#1a1a1a">pd</text><text x="507.7" y="257.4" font-size="6" font-family="Liberation Sans" text-anchor="middle" fill="#1a1a1a">pp</text><text x="545.7" y="253.1" font-size="6" font-family="Liberation Sans" text-anchor="middle" fill="#1a1a1a">pd</text><text x="557.4" y="229.8" font-size="6" font-family="Liberation Sans" text-anchor="middle" fill="#1a1a1a">pd</text><text x="618.4" y="224.3" font-size="6" font-family="Liberation Sans" text-anchor="middle" fill="#1a1a1a">pd</text><text x="587.6" y="283.3" font-size="6" font-family="Liberation Sans" text-anchor="middle" fill="#1a1a1a">pd</text><text x="546.4" y="309.0" font-size="6" font-family="Liberation Sans" text-anchor="middle" fill="#1a1a1a">pp</text><text x="626.2" y="269.2" font-size="6" font-family="Liberation Sans" text-anchor="middle" fill="#1a1a1a">pp</text><text x="452.6" y="306.0" font-size="6" font-family="Liberation Sans" text-anchor="middle" fill="#1a1a1a">pp</text><text x="482.4" y="329.8" font-size="6" font-family="Liberation Sans" text-anchor="middle" fill="#1a1a1a">pd</text><text x="522.7" y="384.1" font-size="6" font-family="Liberation Sans" text-anchor="middle" fill="#1a1a1a">pd</text><text x="529.8" y="410.3" font-size="6" font-family="Liberation Sans" text-anchor="middle" fill="#1a1a1a">pd</text><text x="478.2" y="436.1" font-size="6" font-family="Liberation Sans" text-anchor="middle" fill="#1a1a1a">pd</text><text x="429.1" y="409.8" font-size="6" font-family="Liberation Sans" text-anchor="middle" fill="#1a1a1a">pd</text><text x="395.2" y="354.8" font-size="6" font-family="Liberation Sans" text-anchor="middle" fill="#1a1a1a">pd</text><text x="191.5" y="382.5" font-size="6" font-family="Liberation Sans" text-anchor="middle" fill="#1a1a1a">pp</text><text x="214.1" y="390.2" font-size="6" font-family="Liberation Sans" text-anchor="middle" fill="#1a1a1a">pd</text><text x="232.5" y="405.4" font-size="6" font-family="Liberation Sans" text-anchor="middle" fill="#1a1a1a">pp</text><text x="262.2" y="359.3" font-size="6" font-family="Liberation Sans" text-anchor="middle" fill="#1a1a1a">pd</text><text x="292.0" y="334.3" font-size="6" font-family="Liberation Sans" text-anchor="middle" fill="#1a1a1a">pp</text><text x="315.7" y="354.6" font-size="6" font-family="Liberation Sans" text-anchor="middle" fill="#1a1a1a">pp</text><text x="343.0" y="419.7" font-size="6" font-family="Liberation Sans" text-anchor="middle" fill="#1a1a1a">pp</text><text x="352.5" y="356.5" font-size="6" font-family="Liberation Sans" text-anchor="middle" fill="#1a1a1a">pp</text><text x="173.9" y="394.8" font-size="6" font-family="Liberation Sans" text-anchor="middle" fill="#1a1a1a">pp</text><text x="98.8" y="392.9" font-size="6" font-family="Liberation Sans" text-anchor="middle" fill="#1a1a1a">pp</text><text x="159.0" y="412.4" font-size="6" font-family="Liberation Sans" text-anchor="middle" fill="#1a1a1a">pp</text><text x="114.8" y="435.0" font-size="6" font-family="Liberation Sans" text-anchor="middle" fill="#1a1a1a">pp</text><text x="165.2" y="427.8" font-size="6" font-family="Liberation Sans" text-anchor="middle" fill="#1a1a1a">pp</text><text x="149.8" y="465.6" font-size="6" font-family="Liberation Sans" text-anchor="middle" fill="#1a1a1a">pp</text><text x="173.2" y="485.4" font-size="6" font-family="Liberation Sans" text-anchor="middle" fill="#1a1a1a">pd</text><text x="204.2" y="452.3" font-size="6" font-family="Liberation Sans" text-anchor="middle" fill="#1a1a1a">pp</text><text x="243.0" y="456.6" font-size="6" font-family="Liberation Sans" text-anchor="middle" fill="#1a1a1a">pp</text><text x="692.3" y="450.0" font-size="6" font-family="Liberation Sans" text-anchor="middle" fill="#1a1a1a">pp</text><circle cx="191" cy="81" r="11.2" fill="#fff" stroke="#2a2a2a" stroke-width="1.35"/><text x="191" y="82.4" font-size="3.85" font-family="Liberation Sans" font-weight="bold" text-anchor="middle" fill="#2f97de">YDL278C</text><circle cx="262" cy="66" r="11.2" fill="#fff" stroke="#2a2a2a" stroke-width="1.35"/><text x="262" y="67.4" font-size="3.85" font-family="Liberation Sans" font-weight="bold" text-anchor="middle" fill="#2f97de">YRL242C</text><circle cx="311" cy="90" r="11.2" fill="#fff" stroke="#2a2a2a" stroke-width="1.35"/><text x="311" y="91.4" font-size="3.85" font-family="Liberation Sans" font-weight="bold" text-anchor="middle" fill="#2f97de">YHL240W</text><circle cx="403" cy="91" r="11.2" fill="#fff" stroke="#2a2a2a" stroke-width="1.35"/><text x="403" y="92.4" font-size="3.85" font-family="Liberation Sans" font-weight="bold" text-anchor="middle" fill="#2f97de">YOR098W</text><circle cx="183" cy="141" r="11.2" fill="#fff" stroke="#2a2a2a" stroke-width="1.35"/><text x="183" y="142.4" font-size="3.85" font-family="Liberation Sans" font-weight="bold" text-anchor="middle" fill="#2f97de">YOL243W</text><circle cx="337" cy="154" r="11.2" fill="#fff" stroke="#2a2a2a" stroke-width="1.35"/><text x="337" y="155.4" font-size="3.85" font-family="Liberation Sans" font-weight="bold" text-anchor="middle" fill="#2f97de">YER118C</text><circle cx="372" cy="180" r="11.2" fill="#fff" stroke="#2a2a2a" stroke-width="1.35"/><text x="372" y="181.4" font-size="3.85" font-family="Liberation Sans" font-weight="bold" text-anchor="middle" fill="#2f97de">YJL199C</text><circle cx="319" cy="188" r="11.2" fill="#fff" stroke="#2a2a2a" stroke-width="1.35"/><text x="319" y="189.4" font-size="3.85" font-family="Liberation Sans" font-weight="bold" text-anchor="middle" fill="#2f97de">YEL081C</text><circle cx="181" cy="198" r="11.2" fill="#fff" stroke="#2a2a2a" stroke-width="1.35"/><text x="181" y="199.4" font-size="3.85" font-family="Liberation Sans" font-weight="bold" text-anchor="middle" fill="#2f97de">YPL137W</text><circle cx="375" cy="49" r="11.2" fill="#fff" stroke="#2a2a2a" stroke-width="1.35"/><text x="375" y="50.4" font-size="3.85" font-family="Liberation Sans" font-weight="bold" text-anchor="middle" fill="#2f97de">YHR198W</text><circle cx="420" cy="139.5" r="11.2" fill="#fff" stroke="#2a2a2a" stroke-width="1.35"/><text x="420" y="140.9" font-size="3.85" font-family="Liberation Sans" font-weight="bold" text-anchor="middle" fill="#2f97de">YNR295W</text><circle cx="537" cy="55.5" r="11.2" fill="#fff" stroke="#2a2a2a" stroke-width="1.35"/><text x="537" y="56.9" font-size="3.85" font-family="Liberation Sans" font-weight="bold" text-anchor="middle" fill="#2f97de">YGL049C</text><circle cx="467" cy="105" r="11.2" fill="#fff" stroke="#2a2a2a" stroke-width="1.35"/><text x="467" y="106.4" font-size="3.85" font-family="Liberation Sans" font-weight="bold" text-anchor="middle" fill="#2f97de">YGR111W</text><circle cx="510" cy="128" r="11.2" fill="#fff" stroke="#2a2a2a" stroke-width="1.35"/><text x="510" y="129.4" font-size="3.85" font-family="Liberation Sans" font-weight="bold" text-anchor="middle" fill="#2f97de">YER398W</text><circle cx="578" cy="124" r="11.2" fill="#fff" stroke="#2a2a2a" stroke-width="1.35"/><text x="578" y="125.4" font-size="3.85" font-family="Liberation Sans" font-weight="bold" text-anchor="middle" fill="#2f97de">YNL197W</text><circle cx="557" cy="139.5" r="11.2" fill="#fff" stroke="#2a2a2a" stroke-width="1.35"/><text x="557" y="140.9" font-size="3.85" font-family="Liberation Sans" font-weight="bold" text-anchor="middle" fill="#2f97de">YOL208C</text><circle cx="576" cy="152" r="11.2" fill="#fff" stroke="#2a2a2a" stroke-width="1.35"/><text x="576" y="153.4" font-size="3.85" font-family="Liberation Sans" font-weight="bold" text-anchor="middle" fill="#2f97de">YRR014W</text><circle cx="619.5" cy="139" r="11.2" fill="#fff" stroke="#2a2a2a" stroke-width="1.35"/><text x="619.5" y="140.4" font-size="3.85" font-family="Liberation Sans" font-weight="bold" text-anchor="middle" fill="#2f97de">YHR356C</text><circle cx="495" cy="161" r="11.2" fill="#fff" stroke="#2a2a2a" stroke-width="1.35"/><text x="495" y="162.4" font-size="3.85" font-family="Liberation Sans" font-weight="bold" text-anchor="middle" fill="#2f97de">YCL277C</text><circle cx="546" cy="166" r="11.2" fill="#fff" stroke="#2a2a2a" stroke-width="1.35"/><text x="546" y="167.4" font-size="3.85" font-family="Liberation Sans" font-weight="bold" text-anchor="middle" fill="#2f97de">YCR108W</text><circle cx="442" cy="178" r="11.2" fill="#fff" stroke="#2a2a2a" stroke-width="1.35"/><text x="442" y="179.4" font-size="3.85" font-family="Liberation Sans" font-weight="bold" text-anchor="middle" fill="#2f97de">YPL032W</text><circle cx="464.5" cy="179" r="11.2" fill="#fff" stroke="#2a2a2a" stroke-width="1.35"/><text x="464.5" y="180.4" font-size="3.85" font-family="Liberation Sans" font-weight="bold" text-anchor="middle" fill="#2f97de">YJR247C</text><circle cx="564" cy="188" r="11.2" fill="#fff" stroke="#2a2a2a" stroke-width="1.35"/><text x="564" y="189.4" font-size="3.85" font-family="Liberation Sans" font-weight="bold" text-anchor="middle" fill="#2f97de">YRL210C</text><circle cx="602" cy="197" r="11.2" fill="#fff" stroke="#2a2a2a" stroke-width="1.35"/><text x="602" y="198.4" font-size="3.85" font-family="Liberation Sans" font-weight="bold" text-anchor="middle" fill="#2f97de">YKL218W</text><circle cx="542.5" cy="199" r="11.2" fill="#fff" stroke="#2a2a2a" stroke-width="1.35"/><text x="542.5" y="200.4" font-size="3.85" font-family="Liberation Sans" font-weight="bold" text-anchor="middle" fill="#2f97de">YJL022C</text><circle cx="476" cy="204" r="11.2" fill="#fff" stroke="#2a2a2a" stroke-width="1.35"/><text x="476" y="205.4" font-size="3.85" font-family="Liberation Sans" font-weight="bold" text-anchor="middle" fill="#2f97de">YNR300W</text><circle cx="227" cy="207" r="11.2" fill="#fff" stroke="#2a2a2a" stroke-width="1.35"/><text x="227" y="208.4" font-size="3.85" font-family="Liberation Sans" font-weight="bold" text-anchor="middle" fill="#2f97de">YOL258C</text><circle cx="265" cy="204" r="11.2" fill="#fff" stroke="#2a2a2a" stroke-width="1.35"/><text x="265" y="205.4" font-size="3.85" font-family="Liberation Sans" font-weight="bold" text-anchor="middle" fill="#2f97de">YKL003C</text><circle cx="296" cy="208" r="11.2" fill="#fff" stroke="#2a2a2a" stroke-width="1.35"/><text x="296" y="209.4" font-size="3.85" font-family="Liberation Sans" font-weight="bold" text-anchor="middle" fill="#2f97de">YLL274C</text><circle cx="190" cy="239" r="11.2" fill="#fff" stroke="#2a2a2a" stroke-width="1.35"/><text x="190" y="240.4" font-size="3.85" font-family="Liberation Sans" font-weight="bold" text-anchor="middle" fill="#2f97de">YDR149W</text><circle cx="247.5" cy="236" r="11.2" fill="#fff" stroke="#2a2a2a" stroke-width="1.35"/><text x="247.5" y="237.4" font-size="3.85" font-family="Liberation Sans" font-weight="bold" text-anchor="middle" fill="#2f97de">YGR021W</text><circle cx="299" cy="229.5" r="11.2" fill="#fff" stroke="#2a2a2a" stroke-width="1.35"/><text x="299" y="230.9" font-size="3.85" font-family="Liberation Sans" font-weight="bold" text-anchor="middle" fill="#2f97de">YRL070W</text><circle cx="322.5" cy="227" r="11.2" fill="#fff" stroke="#2a2a2a" stroke-width="1.35"/><text x="322.5" y="228.4" font-size="3.85" font-family="Liberation Sans" font-weight="bold" text-anchor="middle" fill="#2f97de">YNR266W</text><circle cx="362" cy="233" r="11.2" fill="#fff" stroke="#2a2a2a" stroke-width="1.35"/><text x="362" y="234.4" font-size="3.85" font-family="Liberation Sans" font-weight="bold" text-anchor="middle" fill="#2f97de">YEL348C</text><circle cx="412.5" cy="208" r="11.2" fill="#fff" stroke="#2a2a2a" stroke-width="1.35"/><text x="412.5" y="209.4" font-size="3.85" font-family="Liberation Sans" font-weight="bold" text-anchor="middle" fill="#2f97de">YHL138W</text><circle cx="209.5" cy="259" r="11.2" fill="#fff" stroke="#2a2a2a" stroke-width="1.35"/><text x="209.5" y="260.4" font-size="3.85" font-family="Liberation Sans" font-weight="bold" text-anchor="middle" fill="#2f97de">YER366C</text><circle cx="274" cy="262" r="11.2" fill="#fff" stroke="#2a2a2a" stroke-width="1.35"/><text x="274" y="263.4" font-size="3.85" font-family="Liberation Sans" font-weight="bold" text-anchor="middle" fill="#2f97de">YPR132W</text><circle cx="310" cy="250.5" r="11.2" fill="#fff" stroke="#2a2a2a" stroke-width="1.35"/><text x="310" y="251.9" font-size="3.85" font-family="Liberation Sans" font-weight="bold" text-anchor="middle" fill="#2f97de">YOL005W</text><circle cx="366" cy="257" r="11.2" fill="#fff" stroke="#2a2a2a" stroke-width="1.35"/><text x="366" y="258.4" font-size="3.85" font-family="Liberation Sans" font-weight="bold" text-anchor="middle" fill="#2f97de">YHL010W</text><circle cx="412" cy="250" r="11.2" fill="#fff" stroke="#2a2a2a" stroke-width="1.35"/><text x="412" y="251.4" font-size="3.85" font-family="Liberation Sans" font-weight="bold" text-anchor="middle" fill="#2f97de">YHL323C</text><circle cx="226" cy="283" r="11.2" fill="#fff" stroke="#2a2a2a" stroke-width="1.35"/><text x="226" y="284.4" font-size="3.85" font-family="Liberation Sans" font-weight="bold" text-anchor="middle" fill="#2f97de">YKR321W</text><circle cx="335" cy="274" r="11.2" fill="#fff" stroke="#2a2a2a" stroke-width="1.35"/><text x="335" y="275.4" font-size="3.85" font-family="Liberation Sans" font-weight="bold" text-anchor="middle" fill="#2f97de">YBL347W</text><circle cx="386" cy="270" r="11.2" fill="#fff" stroke="#2a2a2a" stroke-width="1.35"/><text x="386" y="271.4" font-size="3.85" font-family="Liberation Sans" font-weight="bold" text-anchor="middle" fill="#2f97de">YHR142W</text><circle cx="409.5" cy="286" r="11.2" fill="#fff" stroke="#2a2a2a" stroke-width="1.35"/><text x="409.5" y="287.4" font-size="3.85" font-family="Liberation Sans" font-weight="bold" text-anchor="middle" fill="#2f97de">YKL031C</text><circle cx="241" cy="307.5" r="11.2" fill="#fff" stroke="#2a2a2a" stroke-width="1.35"/><text x="241" y="308.9" font-size="3.85" font-family="Liberation Sans" font-weight="bold" text-anchor="middle" fill="#2f97de">YRL321W</text><circle cx="296" cy="305.5" r="11.2" fill="#fff" stroke="#2a2a2a" stroke-width="1.35"/><text x="296" y="306.9" font-size="3.85" font-family="Liberation Sans" font-weight="bold" text-anchor="middle" fill="#2f97de">YPL307W</text><circle cx="330" cy="305" r="11.2" fill="#fff" stroke="#2a2a2a" stroke-width="1.35"/><text x="330" y="306.4" font-size="3.85" font-family="Liberation Sans" font-weight="bold" text-anchor="middle" fill="#2f97de">YGL094W</text><circle cx="359" cy="319.5" r="11.2" fill="#fff" stroke="#2a2a2a" stroke-width="1.35"/><text x="359" y="320.9" font-size="3.85" font-family="Liberation Sans" font-weight="bold" text-anchor="middle" fill="#2f97de">YML304W</text><circle cx="382.5" cy="318" r="11.2" fill="#fff" stroke="#2a2a2a" stroke-width="1.35"/><text x="382.5" y="319.4" font-size="3.85" font-family="Liberation Sans" font-weight="bold" text-anchor="middle" fill="#2f97de">YPR053C</text><circle cx="190.5" cy="340.5" r="11.2" fill="#fff" stroke="#2a2a2a" stroke-width="1.35"/><text x="190.5" y="341.9" font-size="3.85" font-family="Liberation Sans" font-weight="bold" text-anchor="middle" fill="#2f97de">YHR376C</text><circle cx="270.5" cy="340.5" r="11.2" fill="#fff" stroke="#2a2a2a" stroke-width="1.35"/><text x="270.5" y="341.9" font-size="3.85" font-family="Liberation Sans" font-weight="bold" text-anchor="middle" fill="#2f97de">YPL113W</text><circle cx="444" cy="224" r="11.2" fill="#fff" stroke="#2a2a2a" stroke-width="1.35"/><text x="444" y="225.4" font-size="3.85" font-family="Liberation Sans" font-weight="bold" text-anchor="middle" fill="#2f97de">YDL095W</text><circle cx="485" cy="228" r="11.2" fill="#fff" stroke="#2a2a2a" stroke-width="1.35"/><text x="485" y="229.4" font-size="3.85" font-family="Liberation Sans" font-weight="bold" text-anchor="middle" fill="#2f97de">YER049C</text><circle cx="454" cy="247" r="11.2" fill="#fff" stroke="#2a2a2a" stroke-width="1.35"/><text x="454" y="248.4" font-size="3.85" font-family="Liberation Sans" font-weight="bold" text-anchor="middle" fill="#2f97de">YHL170C</text><circle cx="605" cy="244" r="11.2" fill="#fff" stroke="#2a2a2a" stroke-width="1.35"/><text x="605" y="245.4" font-size="3.85" font-family="Liberation Sans" font-weight="bold" text-anchor="middle" fill="#2f97de">YBR040W</text><circle cx="635" cy="248" r="11.2" fill="#fff" stroke="#2a2a2a" stroke-width="1.35"/><text x="635" y="249.4" font-size="3.85" font-family="Liberation Sans" font-weight="bold" text-anchor="middle" fill="#2f97de">YCR111W</text><circle cx="572.5" cy="257" r="11.2" fill="#fff" stroke="#2a2a2a" stroke-width="1.35"/><text x="572.5" y="258.4" font-size="3.85" font-family="Liberation Sans" font-weight="bold" text-anchor="middle" fill="#2f97de">YPR061C</text><circle cx="441" cy="274.5" r="11.2" fill="#fff" stroke="#2a2a2a" stroke-width="1.35"/><text x="441" y="275.9" font-size="3.85" font-family="Liberation Sans" font-weight="bold" text-anchor="middle" fill="#2f97de">YOR161C</text><circle cx="530" cy="282.5" r="11.2" fill="#fff" stroke="#2a2a2a" stroke-width="1.35"/><text x="530" y="283.9" font-size="3.85" font-family="Liberation Sans" font-weight="bold" text-anchor="middle" fill="#2f97de">YJL174C</text><circle cx="466" cy="288" r="11.2" fill="#fff" stroke="#2a2a2a" stroke-width="1.35"/><text x="466" y="289.4" font-size="3.85" font-family="Liberation Sans" font-weight="bold" text-anchor="middle" fill="#2f97de">YML176C</text><circle cx="489" cy="305.5" r="11.2" fill="#fff" stroke="#2a2a2a" stroke-width="1.35"/><text x="489" y="306.9" font-size="3.85" font-family="Liberation Sans" font-weight="bold" text-anchor="middle" fill="#2f97de">YNL265W</text><circle cx="430" cy="313" r="11.2" fill="#fff" stroke="#2a2a2a" stroke-width="1.35"/><text x="430" y="314.4" font-size="3.85" font-family="Liberation Sans" font-weight="bold" text-anchor="middle" fill="#2f97de">YBL324W</text><circle cx="603" cy="306" r="11.2" fill="#fff" stroke="#2a2a2a" stroke-width="1.35"/><text x="603" y="307.4" font-size="3.85" font-family="Liberation Sans" font-weight="bold" text-anchor="middle" fill="#2f97de">YPR290W</text><circle cx="563" cy="332" r="11.2" fill="#fff" stroke="#2a2a2a" stroke-width="1.35"/><text x="563" y="333.4" font-size="3.85" font-family="Liberation Sans" font-weight="bold" text-anchor="middle" fill="#2f97de">YKR079C</text><circle cx="464" cy="333" r="11.2" fill="#fff" stroke="#2a2a2a" stroke-width="1.35"/><text x="464" y="334.4" font-size="3.85" font-family="Liberation Sans" font-weight="bold" text-anchor="middle" fill="#2f97de">YKR318W</text><circle cx="647" cy="290" r="11.2" fill="#fff" stroke="#2a2a2a" stroke-width="1.35"/><text x="647" y="291.4" font-size="3.85" font-family="Liberation Sans" font-weight="bold" text-anchor="middle" fill="#2f97de">YOR113C</text><circle cx="236" cy="355" r="11.2" fill="#fff" stroke="#2a2a2a" stroke-width="1.35"/><text x="236" y="356.4" font-size="3.85" font-family="Liberation Sans" font-weight="bold" text-anchor="middle" fill="#2f97de">YCR385W</text><circle cx="288" cy="359.5" r="11.2" fill="#fff" stroke="#2a2a2a" stroke-width="1.35"/><text x="288" y="360.9" font-size="3.85" font-family="Liberation Sans" font-weight="bold" text-anchor="middle" fill="#2f97de">YOL116C</text><circle cx="272" cy="386" r="11.2" fill="#fff" stroke="#2a2a2a" stroke-width="1.35"/><text x="272" y="387.4" font-size="3.85" font-family="Liberation Sans" font-weight="bold" text-anchor="middle" fill="#2f97de">YJL146C</text><circle cx="346" cy="389" r="11.2" fill="#fff" stroke="#2a2a2a" stroke-width="1.35"/><text x="346" y="390.4" font-size="3.85" font-family="Liberation Sans" font-weight="bold" text-anchor="middle" fill="#2f97de">YMR023C</text><circle cx="408" cy="388" r="11.2" fill="#fff" stroke="#2a2a2a" stroke-width="1.35"/><text x="408" y="389.4" font-size="3.85" font-family="Liberation Sans" font-weight="bold" text-anchor="middle" fill="#2f97de">YMR262C</text><circle cx="409.5" cy="349" r="11.2" fill="#fff" stroke="#2a2a2a" stroke-width="1.35"/><text x="409.5" y="350.4" font-size="3.85" font-family="Liberation Sans" font-weight="bold" text-anchor="middle" fill="#2f97de">YNL025C</text><circle cx="192.5" cy="421" r="11.2" fill="#fff" stroke="#2a2a2a" stroke-width="1.35"/><text x="192.5" y="422.4" font-size="3.85" font-family="Liberation Sans" font-weight="bold" text-anchor="middle" fill="#2f97de">YBR061C</text><circle cx="340" cy="446" r="11.2" fill="#fff" stroke="#2a2a2a" stroke-width="1.35"/><text x="340" y="447.4" font-size="3.85" font-family="Liberation Sans" font-weight="bold" text-anchor="middle" fill="#2f97de">YOL122C</text><circle cx="181" cy="451" r="11.2" fill="#fff" stroke="#2a2a2a" stroke-width="1.35"/><text x="181" y="452.4" font-size="3.85" font-family="Liberation Sans" font-weight="bold" text-anchor="middle" fill="#2f97de">YOL211C</text><circle cx="155.5" cy="365" r="11.2" fill="#fff" stroke="#2a2a2a" stroke-width="1.35"/><text x="155.5" y="366.4" font-size="3.85" font-family="Liberation Sans" font-weight="bold" text-anchor="middle" fill="#2f97de">YHL174C</text><circle cx="72" cy="382" r="11.2" fill="#fff" stroke="#2a2a2a" stroke-width="1.35"/><text x="72" y="383.4" font-size="3.85" font-family="Liberation Sans" font-weight="bold" text-anchor="middle" fill="#2f97de">YPL244C</text><circle cx="126" cy="400" r="11.2" fill="#fff" stroke="#2a2a2a" stroke-width="1.35"/><text x="126" y="401.4" font-size="3.85" font-family="Liberation Sans" font-weight="bold" text-anchor="middle" fill="#2f97de">YRR101C</text><circle cx="91" cy="433" r="11.2" fill="#fff" stroke="#2a2a2a" stroke-width="1.35"/><text x="91" y="434.4" font-size="3.85" font-family="Liberation Sans" font-weight="bold" text-anchor="middle" fill="#2f97de">YOL087C</text><circle cx="139" cy="433" r="11.2" fill="#fff" stroke="#2a2a2a" stroke-width="1.35"/><text x="139" y="434.4" font-size="3.85" font-family="Liberation Sans" font-weight="bold" text-anchor="middle" fill="#2f97de">YML065C</text><circle cx="160" cy="470" r="11.2" fill="#fff" stroke="#2a2a2a" stroke-width="1.35"/><text x="160" y="471.4" font-size="3.85" font-family="Liberation Sans" font-weight="bold" text-anchor="middle" fill="#2f97de">YBR292W</text><circle cx="119" cy="476" r="11.2" fill="#fff" stroke="#2a2a2a" stroke-width="1.35"/><text x="119" y="477.4" font-size="3.85" font-family="Liberation Sans" font-weight="bold" text-anchor="middle" fill="#2f97de">YKL127W</text><circle cx="216" cy="480" r="11.2" fill="#fff" stroke="#2a2a2a" stroke-width="1.35"/><text x="216" y="481.4" font-size="3.85" font-family="Liberation Sans" font-weight="bold" text-anchor="middle" fill="#2f97de">YHL266W</text><circle cx="294" cy="488.5" r="11.2" fill="#fff" stroke="#2a2a2a" stroke-width="1.35"/><text x="294" y="489.9" font-size="3.85" font-family="Liberation Sans" font-weight="bold" text-anchor="middle" fill="#2f97de">YKR165C</text><circle cx="142" cy="499" r="11.2" fill="#fff" stroke="#2a2a2a" stroke-width="1.35"/><text x="142" y="500.4" font-size="3.85" font-family="Liberation Sans" font-weight="bold" text-anchor="middle" fill="#2f97de">YJL396C</text><circle cx="499" cy="368" r="11.2" fill="#fff" stroke="#2a2a2a" stroke-width="1.35"/><text x="499" y="369.4" font-size="3.85" font-family="Liberation Sans" font-weight="bold" text-anchor="middle" fill="#2f97de">YKL025C</text><circle cx="546" cy="396" r="11.2" fill="#fff" stroke="#2a2a2a" stroke-width="1.35"/><text x="546" y="397.4" font-size="3.85" font-family="Liberation Sans" font-weight="bold" text-anchor="middle" fill="#2f97de">YBL364C</text><circle cx="450.5" cy="428" r="11.2" fill="#fff" stroke="#2a2a2a" stroke-width="1.35"/><text x="450.5" y="429.4" font-size="3.85" font-family="Liberation Sans" font-weight="bold" text-anchor="middle" fill="#2f97de">YOL250W</text><circle cx="505.5" cy="440" r="11.2" fill="#fff" stroke="#2a2a2a" stroke-width="1.35"/><text x="505.5" y="441.4" font-size="3.85" font-family="Liberation Sans" font-weight="bold" text-anchor="middle" fill="#2f97de">YGL036W</text><circle cx="561" cy="449" r="11.2" fill="#fff" stroke="#2a2a2a" stroke-width="1.35"/><text x="561" y="450.4" font-size="3.85" font-family="Liberation Sans" font-weight="bold" text-anchor="middle" fill="#2f97de">YNR199W</text><circle cx="662" cy="446" r="11.2" fill="#fff" stroke="#2a2a2a" stroke-width="1.35"/><text x="662" y="447.4" font-size="3.85" font-family="Liberation Sans" font-weight="bold" text-anchor="middle" fill="#2f97de">YRL097W</text><circle cx="723" cy="450" r="11.2" fill="#fff" stroke="#2a2a2a" stroke-width="1.35"/><text x="723" y="451.4" font-size="3.85" font-family="Liberation Sans" font-weight="bold" text-anchor="middle" fill="#2f97de">YNL065C</text><circle cx="786" cy="73" r="11.2" fill="#fff" stroke="#2a2a2a" stroke-width="1.35"/><text x="786" y="74.4" font-size="3.85" font-family="Liberation Sans" font-weight="bold" text-anchor="middle" fill="#2f97de">YCR194C</text><circle cx="647" cy="143" r="11.2" fill="#fff" stroke="#2a2a2a" stroke-width="1.35"/><text x="647" y="144.4" font-size="3.85" font-family="Liberation Sans" font-weight="bold" text-anchor="middle" fill="#2f97de">YHR021W</text><circle cx="647" cy="173" r="11.2" fill="#fff" stroke="#2a2a2a" stroke-width="1.35"/><text x="647" y="174.4" font-size="3.85" font-family="Liberation Sans" font-weight="bold" text-anchor="middle" fill="#2f97de">YBL332W</text><circle cx="647" cy="221" r="11.2" fill="#fff" stroke="#2a2a2a" stroke-width="1.35"/><text x="647" y="222.4" font-size="3.85" font-family="Liberation Sans" font-weight="bold" text-anchor="middle" fill="#2f97de">YEL318W</text></svg>
<div class="a" style="left:4.5px;top:15px;width:168.5px;height:341px;background:#e6e6e6;border-radius:4px 4px 0 0;box-shadow:0 5px 10px rgba(0,0,0,.42),1px 0 1px rgba(0,0,0,.12),-1px 0 1px rgba(0,0,0,.12)"></div>
<div class="a tb" style="left:4.5px;top:15px;width:168.5px;height:13.5px;border-radius:4px 4px 0 0"></div>
<div class="tl" style="left:9.100000000000001px;top:17.4px;width:8.6px;height:8.6px"></div>
<div class="tl" style="left:21.9px;top:17.4px;width:8.6px;height:8.6px"></div>
<div class="tl" style="left:34.5px;top:17.4px;width:8.6px;height:8.6px"></div>
<div class="tx" style="left:63px;top:17.5px;font-size:8.35px;color:#4d4d4d;font-weight:normal;">Control Panel</div>
<div class="a" style="left:4.5px;top:28.5px;width:168.5px;height:17px;background:#e3e3e3"></div>
<svg class="a" style="left:146px;top:32px" width="24" height="11"><path d="M4 2.3h4.6l-.6 1 .5 2.6 1.3 1.2h-7l1.3-1.2.5-2.6z" fill="#111"/><path d="M6.3 7v3" stroke="#111" stroke-width="1"/><path d="M14.2 3.2l4.6 4.6M18.8 3.2l-4.6 4.6" stroke="#111" stroke-width="1.6"/></svg>
<div class="a" style="left:9.5px;top:55px;width:158px;height:295px;border:1px solid #cfcfcf;border-radius:3px;background:#e9e9e9"></div>
<div class="a" style="left:11px;top:48.3px;width:155px;height:12px;border:1px solid #8e8e8e;border-radius:4px;background:linear-gradient(#fbfbfb,#efefef 50%,#e2e2e2 51%,#f3f3f3);overflow:hidden"><div class="a" style="left:0;top:0;width:83px;height:10px;background:linear-gradient(#d6d6d6,#c6c6c6 50%,#b9b9b9 51%,#cfcfcf)"></div><div class="a" style="left:139px;top:0;width:0;height:10px;border-left:1px solid #b5b5b5"></div></div>
<svg class="a" style="left:30px;top:48px" width="10" height="13"><path d="M2.5 2v9" stroke="#6b7fa8" stroke-width="1"/><path d="M2.5 5h3M2.5 8.5h3" stroke="#6b7fa8" stroke-width=".7"/><circle cx="2.5" cy="2.3" r="1.6" fill="#58b24a"/><circle cx="6" cy="5.5" r="1.6" fill="#58b24a"/><circle cx="6" cy="9.3" r="1.6" fill="#58b24a"/></svg>
<div class="tx" style="left:42.5px;top:49.8px;font-size:8.45px;color:#111;font-weight:normal;">Network</div>
<div class="tx" style="left:113.6px;top:49.8px;font-size:8.3px;color:#111;font-weight:normal;">Style</div>
<svg class="a" style="left:155px;top:50px" width="9" height="9"><path d="M2 1.3l5 2.9-5 2.9z" fill="#111"/></svg>
<div class="a" style="left:11px;top:65px;width:155px;height:120px;background:#fff;border:1px solid #d2d2d2"></div>
<div class="a" style="left:12px;top:66px;width:153px;height:9.5px;background:linear-gradient(#f7f7f7,#e9e9e9);border-bottom:1px solid #cfcfcf"></div>
<div class="a" style="left:121px;top:66px;width:0;height:9.5px;border-left:1px solid #cdcdcd"></div>
<div class="a" style="left:143.5px;top:66px;width:0;height:9.5px;border-left:1px solid #cdcdcd"></div>
<div class="tx" style="left:14.4px;top:68.6px;font-size:7.1px;color:#222;font-weight:normal;">Network</div>
<div class="tx" style="left:123px;top:68.6px;font-size:7.1px;color:#222;font-weight:normal;">No...</div>
<div class="tx" style="left:145px;top:68.6px;font-size:7.1px;color:#222;font-weight:normal;">Ed...</div>
<svg class="a" style="left:12px;top:78px" width="12" height="8"><path d="M6 1.2l-4 4M6 1.2l4 4M6 1.2v4" stroke="#777" stroke-width=".7" fill="none"/><path d="M1 6.5h10" stroke="#888" stroke-width="1.2" stroke-dasharray="1.2 .8"/></svg>
<div class="tx" style="left:24.7px;top:77.6px;font-size:8px;color:#555;font-weight:normal;"><i>galFiltered.sif</i></div>
<div class="a" style="left:36px;top:86px;width:85px;height:9.5px;background:#d4e2f7"></div>
<div class="tx" style="left:36.5px;top:86.7px;font-size:8px;color:#111;font-weight:bold;">galFiltered.sif</div>
<div class="tx" style="left:122.4px;top:86.7px;font-size:8.4px;color:#333;font-weight:normal;">33...</div>
<div class="tx" style="left:144.9px;top:86.7px;font-size:8.4px;color:#333;font-weight:normal;">36...</div>
<div class="a" style="left:11px;top:185px;width:156px;height:7px;background:#ebebeb;border-top:1px solid #d9d9d9"></div>
<svg class="a" style="left:86px;top:186px" width="4" height="4"><path d="M0.5 3l2.5-2.5" stroke="#777" stroke-width=".7"/></svg>
<div class="a" style="left:11px;top:192px;width:156px;height:156px;background:#fff;border-left:1px solid #d5d5d5;border-right:1px solid #d5d5d5;border-bottom:1px solid #d5d5d5"></div>
<svg class="a" style="left:11px;top:192px" width="156" height="156" viewBox="11 192 156 156"><path d="M79.8 195.0 L83.2 199.0 L84.3 204.0 L84.8 209.6 L87.6 211.8 L89.9 215.2 L94.4 216.9" fill="none" stroke="#c4c4c4" stroke-width=".45"/><circle cx="83.2" cy="199.0" r=".95" fill="#fff" stroke="#b4b4b4" stroke-width=".35"/><circle cx="84.3" cy="204.0" r=".95" fill="#fff" stroke="#b4b4b4" stroke-width=".35"/><circle cx="84.8" cy="209.6" r=".95" fill="#fff" stroke="#b4b4b4" stroke-width=".35"/><circle cx="87.6" cy="211.8" r=".95" fill="#fff" stroke="#b4b4b4" stroke-width=".35"/><circle cx="89.9" cy="215.2" r=".95" fill="#fff" stroke="#b4b4b4" stroke-width=".35"/><circle cx="94.4" cy="216.9" r=".95" fill="#fff" stroke="#b4b4b4" stroke-width=".35"/><path d="M70.3 205.1 L75.3 206.2 L79.8 207.4 L84.3 209.6" fill="none" stroke="#c4c4c4" stroke-width=".45"/><circle cx="75.3" cy="206.2" r=".95" fill="#fff" stroke="#b4b4b4" stroke-width=".35"/><circle cx="79.8" cy="207.4" r=".95" fill="#fff" stroke="#b4b4b4" stroke-width=".35"/><circle cx="84.3" cy="209.6" r=".95" fill="#fff" stroke="#b4b4b4" stroke-width=".35"/><path d="M94.4 216.9 L99.9 216.3 L106.7 217.4 L115.6 219.7 L121.2 223.6 L127.9 228.6 L132.4 231.4 L135.8 239.3" fill="none" stroke="#c4c4c4" stroke-width=".45"/><circle cx="99.9" cy="216.3" r=".95" fill="#fff" stroke="#b4b4b4" stroke-width=".35"/><circle cx="106.7" cy="217.4" r=".95" fill="#fff" stroke="#b4b4b4" stroke-width=".35"/><circle cx="115.6" cy="219.7" r=".95" fill="#fff" stroke="#b4b4b4" stroke-width=".35"/><circle cx="121.2" cy="223.6" r=".95" fill="#fff" stroke="#b4b4b4" stroke-width=".35"/><circle cx="127.9" cy="228.6" r=".95" fill="#fff" stroke="#b4b4b4" stroke-width=".35"/><circle cx="132.4" cy="231.4" r=".95" fill="#fff" stroke="#b4b4b4" stroke-width=".35"/><circle cx="135.8" cy="239.3" r=".95" fill="#fff" stroke="#b4b4b4" stroke-width=".35"/><path d="M115.6 219.7 L120.1 218.6 L125.0 218.6 L130.2 218.6" fill="none" stroke="#c4c4c4" stroke-width=".45"/><circle cx="120.1" cy="218.6" r=".95" fill="#fff" stroke="#b4b4b4" stroke-width=".35"/><circle cx="125.0" cy="218.6" r=".95" fill="#fff" stroke="#b4b4b4" stroke-width=".35"/><circle cx="130.2" cy="218.6" r=".95" fill="#fff" stroke="#b4b4b4" stroke-width=".35"/><path d="M89.9 215.2 L88.8 219.1 L84.3 223.6 L81.5 231.4 L81.5 241.5 L81.5 249.4 L81.5 256.0" fill="none" stroke="#c4c4c4" stroke-width=".45"/><circle cx="88.8" cy="219.1" r=".95" fill="#fff" stroke="#b4b4b4" stroke-width=".35"/><circle cx="84.3" cy="223.6" r=".95" fill="#fff" stroke="#b4b4b4" stroke-width=".35"/><circle cx="81.5" cy="231.4" r=".95" fill="#fff" stroke="#b4b4b4" stroke-width=".35"/><circle cx="81.5" cy="241.5" r=".95" fill="#fff" stroke="#b4b4b4" stroke-width=".35"/><circle cx="81.5" cy="249.4" r=".95" fill="#fff" stroke="#b4b4b4" stroke-width=".35"/><circle cx="81.5" cy="256.0" r=".95" fill="#fff" stroke="#b4b4b4" stroke-width=".35"/><path d="M81.5 231.4 L77.6 225.8 L72.0 220.2" fill="none" stroke="#c4c4c4" stroke-width=".45"/><circle cx="77.6" cy="225.8" r=".95" fill="#fff" stroke="#b4b4b4" stroke-width=".35"/><circle cx="72.0" cy="220.2" r=".95" fill="#fff" stroke="#b4b4b4" stroke-width=".35"/><path d="M81.5 231.4 L74.2 230.3 L67.5 227.0" fill="none" stroke="#c4c4c4" stroke-width=".45"/><circle cx="74.2" cy="230.3" r=".95" fill="#fff" stroke="#b4b4b4" stroke-width=".35"/><circle cx="67.5" cy="227.0" r=".95" fill="#fff" stroke="#b4b4b4" stroke-width=".35"/><path d="M81.5 231.4 L86.5 232.6 L91.0 232.3" fill="none" stroke="#c4c4c4" stroke-width=".45"/><circle cx="86.5" cy="232.6" r=".95" fill="#fff" stroke="#b4b4b4" stroke-width=".35"/><circle cx="91.0" cy="232.3" r=".95" fill="#fff" stroke="#b4b4b4" stroke-width=".35"/><path d="M94.4 242.6 L97.7 234.8 L101.0 228.1 L103.3 222.5" fill="none" stroke="#c4c4c4" stroke-width=".45"/><circle cx="97.7" cy="234.8" r=".95" fill="#fff" stroke="#b4b4b4" stroke-width=".35"/><circle cx="101.0" cy="228.1" r=".95" fill="#fff" stroke="#b4b4b4" stroke-width=".35"/><circle cx="103.3" cy="222.5" r=".95" fill="#fff" stroke="#b4b4b4" stroke-width=".35"/><path d="M101.0 228.1 L106.7 229.8" fill="none" stroke="#c4c4c4" stroke-width=".45"/><circle cx="106.7" cy="229.8" r=".95" fill="#fff" stroke="#b4b4b4" stroke-width=".35"/><path d="M81.5 241.5 L94.4 242.6 L102.2 243.8 L111.1 243.8 L124.6 242.6" fill="none" stroke="#c4c4c4" stroke-width=".45"/><circle cx="94.4" cy="242.6" r=".95" fill="#fff" stroke="#b4b4b4" stroke-width=".35"/><circle cx="102.2" cy="243.8" r=".95" fill="#fff" stroke="#b4b4b4" stroke-width=".35"/><circle cx="111.1" cy="243.8" r=".95" fill="#fff" stroke="#b4b4b4" stroke-width=".35"/><circle cx="124.6" cy="242.6" r=".95" fill="#fff" stroke="#b4b4b4" stroke-width=".35"/><path d="M111.1 243.8 L107.8 236.5" fill="none" stroke="#c4c4c4" stroke-width=".45"/><circle cx="107.8" cy="236.5" r=".95" fill="#fff" stroke="#b4b4b4" stroke-width=".35"/><path d="M111.1 243.8 L112.3 235.9" fill="none" stroke="#c4c4c4" stroke-width=".45"/><circle cx="112.3" cy="235.9" r=".95" fill="#fff" stroke="#b4b4b4" stroke-width=".35"/><path d="M111.1 243.8 L116.7 237.0" fill="none" stroke="#c4c4c4" stroke-width=".45"/><circle cx="116.7" cy="237.0" r=".95" fill="#fff" stroke="#b4b4b4" stroke-width=".35"/><path d="M111.1 243.8 L107.8 248.2" fill="none" stroke="#c4c4c4" stroke-width=".45"/><circle cx="107.8" cy="248.2" r=".95" fill="#fff" stroke="#b4b4b4" stroke-width=".35"/><path d="M111.1 243.8 L113.4 250.5" fill="none" stroke="#c4c4c4" stroke-width=".45"/><circle cx="113.4" cy="250.5" r=".95" fill="#fff" stroke="#b4b4b4" stroke-width=".35"/><path d="M50.1 229.2 L56.3 237.0 L63.0 243.8 L68.6 248.2 L75.3 249.4 L81.5 249.4" fill="none" stroke="#c4c4c4" stroke-width=".45"/><circle cx="56.3" cy="237.0" r=".95" fill="#fff" stroke="#b4b4b4" stroke-width=".35"/><circle cx="63.0" cy="243.8" r=".95" fill="#fff" stroke="#b4b4b4" stroke-width=".35"/><circle cx="68.6" cy="248.2" r=".95" fill="#fff" stroke="#b4b4b4" stroke-width=".35"/><circle cx="75.3" cy="249.4" r=".95" fill="#fff" stroke="#b4b4b4" stroke-width=".35"/><circle cx="81.5" cy="249.4" r=".95" fill="#fff" stroke="#b4b4b4" stroke-width=".35"/><path d="M48.4 238.2 L54.0 241.5 L59.6 243.8 L63.0 243.8" fill="none" stroke="#c4c4c4" stroke-width=".45"/><circle cx="54.0" cy="241.5" r=".95" fill="#fff" stroke="#b4b4b4" stroke-width=".35"/><circle cx="59.6" cy="243.8" r=".95" fill="#fff" stroke="#b4b4b4" stroke-width=".35"/><circle cx="63.0" cy="243.8" r=".95" fill="#fff" stroke="#b4b4b4" stroke-width=".35"/><path d="M72.0 239.3 L76.4 242.6 L81.5 241.5" fill="none" stroke="#c4c4c4" stroke-width=".45"/><circle cx="76.4" cy="242.6" r=".95" fill="#fff" stroke="#b4b4b4" stroke-width=".35"/><circle cx="81.5" cy="241.5" r=".95" fill="#fff" stroke="#b4b4b4" stroke-width=".35"/><path d="M86.0 212.0 L90.0 210.0 L92.0 207.0" fill="none" stroke="#c4c4c4" stroke-width=".45"/><circle cx="90.0" cy="210.0" r=".95" fill="#fff" stroke="#b4b4b4" stroke-width=".35"/><circle cx="92.0" cy="207.0" r=".95" fill="#fff" stroke="#b4b4b4" stroke-width=".35"/><path d="M84.0 222.0 L89.0 225.0 L92.0 228.0" fill="none" stroke="#c4c4c4" stroke-width=".45"/><circle cx="89.0" cy="225.0" r=".95" fill="#fff" stroke="#b4b4b4" stroke-width=".35"/><circle cx="92.0" cy="228.0" r=".95" fill="#fff" stroke="#b4b4b4" stroke-width=".35"/><path d="M98.0 222.0 L96.0 226.0" fill="none" stroke="#c4c4c4" stroke-width=".45"/><circle cx="96.0" cy="226.0" r=".95" fill="#fff" stroke="#b4b4b4" stroke-width=".35"/><path d="M43.6 264.7 L48.0 265.0 L52.2 265.5 L56.0 266.0" fill="none" stroke="#c4c4c4" stroke-width=".45"/><circle cx="48.0" cy="265.0" r=".95" fill="#fff" stroke="#b4b4b4" stroke-width=".35"/><circle cx="52.2" cy="265.5" r=".95" fill="#fff" stroke="#b4b4b4" stroke-width=".35"/><circle cx="56.0" cy="266.0" r=".95" fill="#fff" stroke="#b4b4b4" stroke-width=".35"/><path d="M41.9 280.2 L47.0 281.0 L52.2 282.8 L59.1 281.9" fill="none" stroke="#c4c4c4" stroke-width=".45"/><circle cx="47.0" cy="281.0" r=".95" fill="#fff" stroke="#b4b4b4" stroke-width=".35"/><circle cx="52.2" cy="282.8" r=".95" fill="#fff" stroke="#b4b4b4" stroke-width=".35"/><circle cx="59.1" cy="281.9" r=".95" fill="#fff" stroke="#b4b4b4" stroke-width=".35"/><path d="M57.4 291.4 L59.1 288.8" fill="none" stroke="#c4c4c4" stroke-width=".45"/><circle cx="59.1" cy="288.8" r=".95" fill="#fff" stroke="#b4b4b4" stroke-width=".35"/><path d="M67.8 290.5 L69.0 287.0" fill="none" stroke="#c4c4c4" stroke-width=".45"/><circle cx="69.0" cy="287.0" r=".95" fill="#fff" stroke="#b4b4b4" stroke-width=".35"/><path d="M79.8 293.1 L76.4 293.1" fill="none" stroke="#c4c4c4" stroke-width=".45"/><circle cx="76.4" cy="293.1" r=".95" fill="#fff" stroke="#b4b4b4" stroke-width=".35"/><path d="M79.8 293.1 L82.4 296.6" fill="none" stroke="#c4c4c4" stroke-width=".45"/><circle cx="82.4" cy="296.6" r=".95" fill="#fff" stroke="#b4b4b4" stroke-width=".35"/><path d="M79.8 293.1 L80.7 301.7" fill="none" stroke="#c4c4c4" stroke-width=".45"/><circle cx="80.7" cy="301.7" r=".95" fill="#fff" stroke="#b4b4b4" stroke-width=".35"/><path d="M79.8 293.1 L82.0 288.0" fill="none" stroke="#c4c4c4" stroke-width=".45"/><circle cx="82.0" cy="288.0" r=".95" fill="#fff" stroke="#b4b4b4" stroke-width=".35"/><path d="M97.1 291.4 L98.8 296.6 L102.2 301.7 L104.8 305.2" fill="none" stroke="#c4c4c4" stroke-width=".45"/><circle cx="98.8" cy="296.6" r=".95" fill="#fff" stroke="#b4b4b4" stroke-width=".35"/><circle cx="102.2" cy="301.7" r=".95" fill="#fff" stroke="#b4b4b4" stroke-width=".35"/><circle cx="104.8" cy="305.2" r=".95" fill="#fff" stroke="#b4b4b4" stroke-width=".35"/><path d="M45.3 313.8 L42.0 311.0" fill="none" stroke="#c4c4c4" stroke-width=".45"/><circle cx="42.0" cy="311.0" r=".95" fill="#fff" stroke="#b4b4b4" stroke-width=".35"/><path d="M45.3 313.8 L48.0 310.5" fill="none" stroke="#c4c4c4" stroke-width=".45"/><circle cx="48.0" cy="310.5" r=".95" fill="#fff" stroke="#b4b4b4" stroke-width=".35"/><path d="M45.3 313.8 L42.5 317.5" fill="none" stroke="#c4c4c4" stroke-width=".45"/><circle cx="42.5" cy="317.5" r=".95" fill="#fff" stroke="#b4b4b4" stroke-width=".35"/><path d="M45.3 313.8 L49.0 317.0" fill="none" stroke="#c4c4c4" stroke-width=".45"/><circle cx="49.0" cy="317.0" r=".95" fill="#fff" stroke="#b4b4b4" stroke-width=".35"/><path d="M45.3 313.8 L51.0 316.0" fill="none" stroke="#c4c4c4" stroke-width=".45"/><circle cx="51.0" cy="316.0" r=".95" fill="#fff" stroke="#b4b4b4" stroke-width=".35"/><path d="M55.7 313.8 L60.0 313.8 L66.0 313.8 L67.8 318.1" fill="none" stroke="#c4c4c4" stroke-width=".45"/><circle cx="60.0" cy="313.8" r=".95" fill="#fff" stroke="#b4b4b4" stroke-width=".35"/><circle cx="66.0" cy="313.8" r=".95" fill="#fff" stroke="#b4b4b4" stroke-width=".35"/><circle cx="67.8" cy="318.1" r=".95" fill="#fff" stroke="#b4b4b4" stroke-width=".35"/><path d="M66.0 313.8 L66.5 309.5" fill="none" stroke="#c4c4c4" stroke-width=".45"/><circle cx="66.5" cy="309.5" r=".95" fill="#fff" stroke="#b4b4b4" stroke-width=".35"/><path d="M71.2 310.3 L75.0 312.5 L79.0 314.5 L83.0 316.5 L86.7 319.0" fill="none" stroke="#c4c4c4" stroke-width=".45"/><circle cx="75.0" cy="312.5" r=".95" fill="#fff" stroke="#b4b4b4" stroke-width=".35"/><circle cx="79.0" cy="314.5" r=".95" fill="#fff" stroke="#b4b4b4" stroke-width=".35"/><circle cx="83.0" cy="316.5" r=".95" fill="#fff" stroke="#b4b4b4" stroke-width=".35"/><circle cx="86.7" cy="319.0" r=".95" fill="#fff" stroke="#b4b4b4" stroke-width=".35"/><path d="M90.2 313.8 L95.0 313.8 L100.5 313.8 L101.4 318.1" fill="none" stroke="#c4c4c4" stroke-width=".45"/><circle cx="95.0" cy="313.8" r=".95" fill="#fff" stroke="#b4b4b4" stroke-width=".35"/><circle cx="100.5" cy="313.8" r=".95" fill="#fff" stroke="#b4b4b4" stroke-width=".35"/><circle cx="101.4" cy="318.1" r=".95" fill="#fff" stroke="#b4b4b4" stroke-width=".35"/><path d="M100.5 313.8 L101.5 310.0" fill="none" stroke="#c4c4c4" stroke-width=".45"/><circle cx="101.5" cy="310.0" r=".95" fill="#fff" stroke="#b4b4b4" stroke-width=".35"/><path d="M105.7 310.3 L109.0 311.0 L110.9 315.0 L108.0 319.0 L105.0 316.0 L105.7 310.3" fill="none" stroke="#c4c4c4" stroke-width=".45"/><circle cx="109.0" cy="311.0" r=".95" fill="#fff" stroke="#b4b4b4" stroke-width=".35"/><circle cx="110.9" cy="315.0" r=".95" fill="#fff" stroke="#b4b4b4" stroke-width=".35"/><circle cx="108.0" cy="319.0" r=".95" fill="#fff" stroke="#b4b4b4" stroke-width=".35"/><circle cx="105.0" cy="316.0" r=".95" fill="#fff" stroke="#b4b4b4" stroke-width=".35"/><circle cx="105.7" cy="310.3" r=".95" fill="#fff" stroke="#b4b4b4" stroke-width=".35"/><path d="M110.9 315.0 L113.0 318.0" fill="none" stroke="#c4c4c4" stroke-width=".45"/><circle cx="113.0" cy="318.0" r=".95" fill="#fff" stroke="#b4b4b4" stroke-width=".35"/><path d="M41.9 334.5 L44.5 331.0 L47.5 327.5 L50.5 324.1" fill="none" stroke="#c4c4c4" stroke-width=".45"/><circle cx="44.5" cy="331.0" r=".95" fill="#fff" stroke="#b4b4b4" stroke-width=".35"/><circle cx="47.5" cy="327.5" r=".95" fill="#fff" stroke="#b4b4b4" stroke-width=".35"/><circle cx="50.5" cy="324.1" r=".95" fill="#fff" stroke="#b4b4b4" stroke-width=".35"/><path d="M53.1 334.5 L55.7 331.0 L58.3 327.5 L60.9 324.1" fill="none" stroke="#c4c4c4" stroke-width=".45"/><circle cx="55.7" cy="331.0" r=".95" fill="#fff" stroke="#b4b4b4" stroke-width=".35"/><circle cx="58.3" cy="327.5" r=".95" fill="#fff" stroke="#b4b4b4" stroke-width=".35"/><circle cx="60.9" cy="324.1" r=".95" fill="#fff" stroke="#b4b4b4" stroke-width=".35"/><path d="M64.3 327.0 L67.0 325.9 L70.3 327.5 L69.5 330.2 L66.0 331.0 L64.3 327.0" fill="none" stroke="#c4c4c4" stroke-width=".45"/><circle cx="67.0" cy="325.9" r=".95" fill="#fff" stroke="#b4b4b4" stroke-width=".35"/><circle cx="70.3" cy="327.5" r=".95" fill="#fff" stroke="#b4b4b4" stroke-width=".35"/><circle cx="69.5" cy="330.2" r=".95" fill="#fff" stroke="#b4b4b4" stroke-width=".35"/><circle cx="66.0" cy="331.0" r=".95" fill="#fff" stroke="#b4b4b4" stroke-width=".35"/><circle cx="64.3" cy="327.0" r=".95" fill="#fff" stroke="#b4b4b4" stroke-width=".35"/><path d="M76.4 327.6 L74.5 324.5" fill="none" stroke="#c4c4c4" stroke-width=".45"/><circle cx="74.5" cy="324.5" r=".95" fill="#fff" stroke="#b4b4b4" stroke-width=".35"/><path d="M76.4 327.6 L80.0 328.0" fill="none" stroke="#c4c4c4" stroke-width=".45"/><circle cx="80.0" cy="328.0" r=".95" fill="#fff" stroke="#b4b4b4" stroke-width=".35"/><path d="M76.4 327.6 L77.0 331.5" fill="none" stroke="#c4c4c4" stroke-width=".45"/><circle cx="77.0" cy="331.5" r=".95" fill="#fff" stroke="#b4b4b4" stroke-width=".35"/><path d="M76.4 327.6 L83.0 328.5" fill="none" stroke="#c4c4c4" stroke-width=".45"/><circle cx="83.0" cy="328.5" r=".95" fill="#fff" stroke="#b4b4b4" stroke-width=".35"/><path d="M85.0 324.1 L88.5 326.5 L91.9 329.3" fill="none" stroke="#c4c4c4" stroke-width=".45"/><circle cx="88.5" cy="326.5" r=".95" fill="#fff" stroke="#b4b4b4" stroke-width=".35"/><circle cx="91.9" cy="329.3" r=".95" fill="#fff" stroke="#b4b4b4" stroke-width=".35"/><path d="M95.3 324.1 L98.0 327.5 L101.4 331.0" fill="none" stroke="#c4c4c4" stroke-width=".45"/><circle cx="98.0" cy="327.5" r=".95" fill="#fff" stroke="#b4b4b4" stroke-width=".35"/><circle cx="101.4" cy="331.0" r=".95" fill="#fff" stroke="#b4b4b4" stroke-width=".35"/><path d="M105.7 324.1 L107.0 327.0 L106.0 329.0" fill="none" stroke="#c4c4c4" stroke-width=".45"/><circle cx="107.0" cy="327.0" r=".95" fill="#fff" stroke="#b4b4b4" stroke-width=".35"/><circle cx="106.0" cy="329.0" r=".95" fill="#fff" stroke="#b4b4b4" stroke-width=".35"/><path d="M112.6 324.1 L116.0 327.5 L119.5 331.0" fill="none" stroke="#c4c4c4" stroke-width=".45"/><circle cx="116.0" cy="327.5" r=".95" fill="#fff" stroke="#b4b4b4" stroke-width=".35"/><circle cx="119.5" cy="331.0" r=".95" fill="#fff" stroke="#b4b4b4" stroke-width=".35"/><path d="M41.9 337.9 L45.0 341.0 L47.9 344.0" fill="none" stroke="#c4c4c4" stroke-width=".45"/><circle cx="45.0" cy="341.0" r=".95" fill="#fff" stroke="#b4b4b4" stroke-width=".35"/><circle cx="47.9" cy="344.0" r=".95" fill="#fff" stroke="#b4b4b4" stroke-width=".35"/><path d="M51.4 337.9 L55.0 341.0 L58.3 344.0" fill="none" stroke="#c4c4c4" stroke-width=".45"/><circle cx="55.0" cy="341.0" r=".95" fill="#fff" stroke="#b4b4b4" stroke-width=".35"/><circle cx="58.3" cy="344.0" r=".95" fill="#fff" stroke="#b4b4b4" stroke-width=".35"/><path d="M61.7 337.9 L64.8 341.5 L67.8 344.8" fill="none" stroke="#c4c4c4" stroke-width=".45"/><circle cx="64.8" cy="341.5" r=".95" fill="#fff" stroke="#b4b4b4" stroke-width=".35"/><circle cx="67.8" cy="344.8" r=".95" fill="#fff" stroke="#b4b4b4" stroke-width=".35"/><path d="M70.0 258.0 L67.3 259.0 L64.5 258.9 L61.8 259.8" fill="none" stroke="#9c9c9c" stroke-width=".4"/><circle cx="61.8" cy="259.8" r=".9" fill="none" stroke="#999" stroke-width=".3"/><path d="M70.0 258.0 L71.5 255.9 L72.1 253.4 L72.2 250.8 L71.2 248.3" fill="none" stroke="#9c9c9c" stroke-width=".4"/><circle cx="71.2" cy="248.3" r=".9" fill="none" stroke="#999" stroke-width=".3"/><path d="M70.0 258.0 L71.4 255.2 L72.6 252.2" fill="none" stroke="#9c9c9c" stroke-width=".4"/><circle cx="72.6" cy="252.2" r=".9" fill="none" stroke="#999" stroke-width=".3"/><path d="M70.0 258.0 L67.3 260.0 L65.9 263.0 L64.4 265.9 L64.3 269.2" fill="none" stroke="#9c9c9c" stroke-width=".4"/><circle cx="64.3" cy="269.2" r=".9" fill="none" stroke="#999" stroke-width=".3"/><path d="M70.0 258.0 L70.2 260.0 L70.7 261.9" fill="none" stroke="#9c9c9c" stroke-width=".4"/><circle cx="70.7" cy="261.9" r=".9" fill="none" stroke="#999" stroke-width=".3"/><path d="M70.0 258.0 L68.6 256.8 L67.2 255.6" fill="none" stroke="#9c9c9c" stroke-width=".4"/><circle cx="67.2" cy="255.6" r=".9" fill="none" stroke="#999" stroke-width=".3"/><path d="M70.0 258.0 L68.5 256.0 L67.0 253.8 L66.6 251.3" fill="none" stroke="#9c9c9c" stroke-width=".4"/><circle cx="66.6" cy="251.3" r=".9" fill="none" stroke="#999" stroke-width=".3"/><path d="M82.0 262.0 L83.7 263.0 L85.7 263.2" fill="none" stroke="#9c9c9c" stroke-width=".4"/><circle cx="85.7" cy="263.2" r=".9" fill="none" stroke="#999" stroke-width=".3"/><path d="M82.0 262.0 L80.8 260.9 L79.5 260.0" fill="none" stroke="#9c9c9c" stroke-width=".4"/><circle cx="79.5" cy="260.0" r=".9" fill="none" stroke="#999" stroke-width=".3"/><path d="M82.0 262.0 L85.1 260.1 L88.6 259.7" fill="none" stroke="#9c9c9c" stroke-width=".4"/><circle cx="88.6" cy="259.7" r=".9" fill="none" stroke="#999" stroke-width=".3"/><path d="M82.0 262.0 L84.3 262.5 L86.6 262.1 L88.9 261.9 L91.2 262.4" fill="none" stroke="#9c9c9c" stroke-width=".4"/><circle cx="91.2" cy="262.4" r=".9" fill="none" stroke="#999" stroke-width=".3"/><path d="M82.0 262.0 L82.6 263.5 L83.2 264.9 L83.3 266.4" fill="none" stroke="#9c9c9c" stroke-width=".4"/><circle cx="83.3" cy="266.4" r=".9" fill="none" stroke="#999" stroke-width=".3"/><path d="M82.0 262.0 L85.0 263.3 L87.4 265.3" fill="none" stroke="#9c9c9c" stroke-width=".4"/><circle cx="87.4" cy="265.3" r=".9" fill="none" stroke="#999" stroke-width=".3"/><path d="M82.0 262.0 L83.2 264.5 L83.1 267.4 L82.2 270.1" fill="none" stroke="#9c9c9c" stroke-width=".4"/><circle cx="82.2" cy="270.1" r=".9" fill="none" stroke="#999" stroke-width=".3"/><path d="M95.0 261.0 L93.0 262.3 L91.5 264.1 L90.5 266.2" fill="none" stroke="#9c9c9c" stroke-width=".4"/><circle cx="90.5" cy="266.2" r=".9" fill="none" stroke="#999" stroke-width=".3"/><path d="M95.0 261.0 L98.3 262.1 L101.7 261.5 L104.8 259.9" fill="none" stroke="#9c9c9c" stroke-width=".4"/><circle cx="104.8" cy="259.9" r=".9" fill="none" stroke="#999" stroke-width=".3"/><path d="M95.0 261.0 L97.7 259.8 L100.6 260.0 L103.5 259.3 L106.1 258.0" fill="none" stroke="#9c9c9c" stroke-width=".4"/><circle cx="106.1" cy="258.0" r=".9" fill="none" stroke="#999" stroke-width=".3"/><path d="M95.0 261.0 L95.1 258.8 L94.2 256.8 L92.8 255.0" fill="none" stroke="#9c9c9c" stroke-width=".4"/><circle cx="92.8" cy="255.0" r=".9" fill="none" stroke="#999" stroke-width=".3"/><path d="M95.0 261.0 L94.0 260.1 L92.9 259.2 L92.3 258.0" fill="none" stroke="#9c9c9c" stroke-width=".4"/><circle cx="92.3" cy="258.0" r=".9" fill="none" stroke="#999" stroke-width=".3"/><path d="M95.0 261.0 L92.4 262.2 L90.3 264.2 L87.6 265.2" fill="none" stroke="#9c9c9c" stroke-width=".4"/><circle cx="87.6" cy="265.2" r=".9" fill="none" stroke="#999" stroke-width=".3"/><path d="M95.0 261.0 L95.2 259.0 L95.6 257.1" fill="none" stroke="#9c9c9c" stroke-width=".4"/><circle cx="95.6" cy="257.1" r=".9" fill="none" stroke="#999" stroke-width=".3"/><path d="M110.0 270.0 L107.6 267.9 L105.5 265.6 L103.1 263.4" fill="none" stroke="#9c9c9c" stroke-width=".4"/><circle cx="103.1" cy="263.4" r=".9" fill="none" stroke="#999" stroke-width=".3"/><path d="M110.0 270.0 L111.3 270.5 L112.5 271.4 L113.9 271.8" fill="none" stroke="#9c9c9c" stroke-width=".4"/><circle cx="113.9" cy="271.8" r=".9" fill="none" stroke="#999" stroke-width=".3"/><path d="M110.0 270.0 L111.4 267.4 L113.7 265.6 L116.5 265.1" fill="none" stroke="#9c9c9c" stroke-width=".4"/><circle cx="116.5" cy="265.1" r=".9" fill="none" stroke="#999" stroke-width=".3"/><path d="M110.0 270.0 L111.1 272.4 L111.9 274.9 L113.2 277.1 L113.5 279.7" fill="none" stroke="#9c9c9c" stroke-width=".4"/><circle cx="113.5" cy="279.7" r=".9" fill="none" stroke="#999" stroke-width=".3"/><path d="M110.0 270.0 L110.5 271.3 L111.3 272.4 L112.5 273.0" fill="none" stroke="#9c9c9c" stroke-width=".4"/><circle cx="112.5" cy="273.0" r=".9" fill="none" stroke="#999" stroke-width=".3"/><path d="M110.0 270.0 L110.6 272.7 L112.0 275.0" fill="none" stroke="#9c9c9c" stroke-width=".4"/><circle cx="112.0" cy="275.0" r=".9" fill="none" stroke="#999" stroke-width=".3"/><path d="M110.0 270.0 L107.8 270.3 L105.6 270.4 L103.5 271.2 L102.1 272.9" fill="none" stroke="#9c9c9c" stroke-width=".4"/><circle cx="102.1" cy="272.9" r=".9" fill="none" stroke="#999" stroke-width=".3"/><path d="M60.0 282.0 L63.7 281.7 L67.0 279.8 L70.4 278.2 L72.8 275.3" fill="none" stroke="#9c9c9c" stroke-width=".4"/><circle cx="72.8" cy="275.3" r=".9" fill="none" stroke="#999" stroke-width=".3"/><path d="M60.0 282.0 L61.3 283.7 L63.2 284.8" fill="none" stroke="#9c9c9c" stroke-width=".4"/><circle cx="63.2" cy="284.8" r=".9" fill="none" stroke="#999" stroke-width=".3"/><path d="M60.0 282.0 L57.1 280.3 L53.9 279.8 L51.2 277.9 L48.2 276.5" fill="none" stroke="#9c9c9c" stroke-width=".4"/><circle cx="48.2" cy="276.5" r=".9" fill="none" stroke="#999" stroke-width=".3"/><path d="M60.0 282.0 L61.6 284.0 L63.4 285.9" fill="none" stroke="#9c9c9c" stroke-width=".4"/><circle cx="63.4" cy="285.9" r=".9" fill="none" stroke="#999" stroke-width=".3"/><path d="M60.0 282.0 L59.2 278.5 L58.9 274.8 L58.2 271.3 L55.9 268.4" fill="none" stroke="#9c9c9c" stroke-width=".4"/><circle cx="55.9" cy="268.4" r=".9" fill="none" stroke="#999" stroke-width=".3"/><path d="M60.0 282.0 L60.9 283.3 L61.3 284.8" fill="none" stroke="#9c9c9c" stroke-width=".4"/><circle cx="61.3" cy="284.8" r=".9" fill="none" stroke="#999" stroke-width=".3"/><path d="M60.0 282.0 L60.1 279.6 L60.2 277.3 L60.1 274.9 L60.1 272.5" fill="none" stroke="#9c9c9c" stroke-width=".4"/><circle cx="60.1" cy="272.5" r=".9" fill="none" stroke="#999" stroke-width=".3"/><path d="M90.0 285.0 L87.4 284.4 L84.7 283.9 L82.0 284.1" fill="none" stroke="#9c9c9c" stroke-width=".4"/><circle cx="82.0" cy="284.1" r=".9" fill="none" stroke="#999" stroke-width=".3"/><path d="M90.0 285.0 L89.6 282.4 L89.1 279.8 L89.7 277.2 L89.9 274.5" fill="none" stroke="#9c9c9c" stroke-width=".4"/><circle cx="89.9" cy="274.5" r=".9" fill="none" stroke="#999" stroke-width=".3"/><path d="M90.0 285.0 L92.5 286.6 L94.2 289.1 L95.4 291.7 L96.8 294.3" fill="none" stroke="#9c9c9c" stroke-width=".4"/><circle cx="96.8" cy="294.3" r=".9" fill="none" stroke="#999" stroke-width=".3"/><path d="M90.0 285.0 L91.3 283.2 L92.9 281.6 L94.8 280.6 L96.9 280.1" fill="none" stroke="#9c9c9c" stroke-width=".4"/><circle cx="96.9" cy="280.1" r=".9" fill="none" stroke="#999" stroke-width=".3"/><path d="M90.0 285.0 L90.4 286.9 L91.2 288.6" fill="none" stroke="#9c9c9c" stroke-width=".4"/><circle cx="91.2" cy="288.6" r=".9" fill="none" stroke="#999" stroke-width=".3"/><path d="M90.0 285.0 L91.3 287.3 L91.4 290.0" fill="none" stroke="#9c9c9c" stroke-width=".4"/><circle cx="91.4" cy="290.0" r=".9" fill="none" stroke="#999" stroke-width=".3"/><path d="M90.0 285.0 L89.8 286.8 L88.8 288.3 L87.4 289.4" fill="none" stroke="#9c9c9c" stroke-width=".4"/><circle cx="87.4" cy="289.4" r=".9" fill="none" stroke="#999" stroke-width=".3"/><path d="M105.0 282.0 L103.4 284.2 L101.1 285.7 L98.4 286.0 L95.7 286.4" fill="none" stroke="#9c9c9c" stroke-width=".4"/><circle cx="95.7" cy="286.4" r=".9" fill="none" stroke="#999" stroke-width=".3"/><path d="M105.0 282.0 L106.4 282.0 L107.8 282.3 L109.2 282.7 L110.6 282.9" fill="none" stroke="#9c9c9c" stroke-width=".4"/><circle cx="110.6" cy="282.9" r=".9" fill="none" stroke="#999" stroke-width=".3"/><path d="M105.0 282.0 L105.2 280.6 L105.0 279.3" fill="none" stroke="#9c9c9c" stroke-width=".4"/><circle cx="105.0" cy="279.3" r=".9" fill="none" stroke="#999" stroke-width=".3"/><path d="M105.0 282.0 L105.8 280.1 L107.4 278.9" fill="none" stroke="#9c9c9c" stroke-width=".4"/><circle cx="107.4" cy="278.9" r=".9" fill="none" stroke="#999" stroke-width=".3"/><path d="M105.0 282.0 L106.0 283.3 L106.6 284.8 L106.5 286.4 L106.1 287.9" fill="none" stroke="#9c9c9c" stroke-width=".4"/><circle cx="106.1" cy="287.9" r=".9" fill="none" stroke="#999" stroke-width=".3"/><path d="M105.0 282.0 L105.3 284.6 L104.9 287.2" fill="none" stroke="#9c9c9c" stroke-width=".4"/><circle cx="104.9" cy="287.2" r=".9" fill="none" stroke="#999" stroke-width=".3"/><path d="M105.0 282.0 L103.6 282.0 L102.2 282.2" fill="none" stroke="#9c9c9c" stroke-width=".4"/><circle cx="102.2" cy="282.2" r=".9" fill="none" stroke="#999" stroke-width=".3"/><path d="M120.0 265.0 L120.4 262.3 L120.0 259.6 L120.4 257.0 L121.4 254.4" fill="none" stroke="#9c9c9c" stroke-width=".4"/><circle cx="121.4" cy="254.4" r=".9" fill="none" stroke="#999" stroke-width=".3"/><path d="M120.0 265.0 L120.7 267.3 L121.4 269.6 L122.9 271.6 L123.5 274.0" fill="none" stroke="#9c9c9c" stroke-width=".4"/><circle cx="123.5" cy="274.0" r=".9" fill="none" stroke="#999" stroke-width=".3"/><path d="M120.0 265.0 L122.6 266.1 L124.7 268.0 L125.8 270.6 L127.0 273.1" fill="none" stroke="#9c9c9c" stroke-width=".4"/><circle cx="127.0" cy="273.1" r=".9" fill="none" stroke="#999" stroke-width=".3"/><path d="M120.0 265.0 L119.5 263.2 L119.6 261.3 L120.4 259.6 L120.6 257.8" fill="none" stroke="#9c9c9c" stroke-width=".4"/><circle cx="120.6" cy="257.8" r=".9" fill="none" stroke="#999" stroke-width=".3"/><path d="M120.0 265.0 L119.0 267.2 L117.9 269.3" fill="none" stroke="#9c9c9c" stroke-width=".4"/><circle cx="117.9" cy="269.3" r=".9" fill="none" stroke="#999" stroke-width=".3"/><path d="M120.0 265.0 L121.3 263.2 L122.2 261.2 L122.3 259.1 L122.3 256.9" fill="none" stroke="#9c9c9c" stroke-width=".4"/><circle cx="122.3" cy="256.9" r=".9" fill="none" stroke="#999" stroke-width=".3"/><path d="M120.0 265.0 L117.5 262.7 L114.4 261.3 L112.1 258.8" fill="none" stroke="#9c9c9c" stroke-width=".4"/><circle cx="112.1" cy="258.8" r=".9" fill="none" stroke="#999" stroke-width=".3"/><line x1="70" y1="258" x2="82" y2="262" stroke="#9c9c9c" stroke-width=".4"/><line x1="82" y1="262" x2="95" y2="261" stroke="#9c9c9c" stroke-width=".4"/><line x1="95" y1="261" x2="110" y2="270" stroke="#9c9c9c" stroke-width=".4"/><line x1="70" y1="258" x2="60" y2="282" stroke="#9c9c9c" stroke-width=".4"/><line x1="60" y1="282" x2="90" y2="285" stroke="#9c9c9c" stroke-width=".4"/><line x1="90" y1="285" x2="105" y2="282" stroke="#9c9c9c" stroke-width=".4"/><line x1="105" y1="282" x2="120" y2="265" stroke="#9c9c9c" stroke-width=".4"/><line x1="110" y1="270" x2="120" y2="265" stroke="#9c9c9c" stroke-width=".4"/><line x1="82" y1="262" x2="90" y2="285" stroke="#9c9c9c" stroke-width=".4"/><circle cx="75" cy="262" r="9" fill="none" stroke="#a0a0a0" stroke-width=".4"/><path d="M78 288q20-10 40-24" fill="none" stroke="#a0a0a0" stroke-width=".4"/><circle cx="71.2" cy="337.9" r=".95" fill="none" stroke="#aaa" stroke-width=".35"/><circle cx="71.2" cy="342.2" r=".95" fill="none" stroke="#aaa" stroke-width=".35"/><path d="M71.2 338.9v2.3" stroke="#bbb" stroke-width=".35"/><circle cx="75.3" cy="337.9" r=".95" fill="none" stroke="#aaa" stroke-width=".35"/><circle cx="75.3" cy="342.2" r=".95" fill="none" stroke="#aaa" stroke-width=".35"/><path d="M75.3 338.9v2.3" stroke="#bbb" stroke-width=".35"/><circle cx="79.4" cy="337.9" r=".95" fill="none" stroke="#aaa" stroke-width=".35"/><circle cx="79.4" cy="342.2" r=".95" fill="none" stroke="#aaa" stroke-width=".35"/><path d="M79.4 338.9v2.3" stroke="#bbb" stroke-width=".35"/><circle cx="83.5" cy="337.9" r=".95" fill="none" stroke="#aaa" stroke-width=".35"/><circle cx="83.5" cy="342.2" r=".95" fill="none" stroke="#aaa" stroke-width=".35"/><path d="M83.5 338.9v2.3" stroke="#bbb" stroke-width=".35"/><circle cx="87.6" cy="337.9" r=".95" fill="none" stroke="#aaa" stroke-width=".35"/><circle cx="87.6" cy="342.2" r=".95" fill="none" stroke="#aaa" stroke-width=".35"/><path d="M87.6 338.9v2.3" stroke="#bbb" stroke-width=".35"/><circle cx="91.7" cy="337.9" r=".95" fill="none" stroke="#aaa" stroke-width=".35"/><circle cx="91.7" cy="342.2" r=".95" fill="none" stroke="#aaa" stroke-width=".35"/><path d="M91.7 338.9v2.3" stroke="#bbb" stroke-width=".35"/><circle cx="95.8" cy="337.9" r=".95" fill="none" stroke="#aaa" stroke-width=".35"/><circle cx="95.8" cy="342.2" r=".95" fill="none" stroke="#aaa" stroke-width=".35"/><path d="M95.8 338.9v2.3" stroke="#bbb" stroke-width=".35"/><circle cx="99.9" cy="337.9" r=".95" fill="none" stroke="#aaa" stroke-width=".35"/><circle cx="99.9" cy="342.2" r=".95" fill="none" stroke="#aaa" stroke-width=".35"/><path d="M99.9 338.9v2.3" stroke="#bbb" stroke-width=".35"/><circle cx="104.0" cy="337.9" r=".95" fill="none" stroke="#aaa" stroke-width=".35"/><circle cx="104.0" cy="342.2" r=".95" fill="none" stroke="#aaa" stroke-width=".35"/><path d="M104.0 338.9v2.3" stroke="#bbb" stroke-width=".35"/><rect x="52.1" y="251.3" width="73.9" height="37.3" fill="#6c6cf2" fill-opacity=".58"/></svg>
<div class="a" style="left:640px;top:67px;width:352px;height:338px;background:#e8e8e8;border-radius:4px 4px 0 0;box-shadow:0 5px 10px rgba(0,0,0,.42),1px 0 1px rgba(0,0,0,.12),-1px 0 1px rgba(0,0,0,.12)"></div>
<div class="a tb" style="left:640px;top:67px;width:352px;height:14px;border-radius:4px 4px 0 0"></div>
<div class="tl" style="left:644.7px;top:69.10000000000001px;width:8.6px;height:8.6px"></div>
<div class="tl" style="left:657.5px;top:69.10000000000001px;width:8.6px;height:8.6px"></div>
<div class="tl" style="left:670.3000000000001px;top:69.10000000000001px;width:8.6px;height:8.6px"></div>
<div class="tx" style="left:791.2px;top:70.6px;font-size:8.0px;color:#4d4d4d;font-weight:normal;">Results Panel</div>
<div class="a" style="left:640px;top:81px;width:352px;height:16px;background:#e2e2e2"></div>
<svg class="a" style="left:965px;top:84px" width="24" height="11"><path d="M3 2.3h4.6l-.6 1 .5 2.6 1.3 1.2h-7l1.3-1.2.5-2.6z" fill="#111"/><path d="M5.3 7v3" stroke="#111" stroke-width="1"/><path d="M13.8 3.5l4.4 4.4M18.2 3.5l-4.4 4.4" stroke="#111" stroke-width="1.6"/></svg>
<div class="a" style="left:645.7px;top:107.4px;width:341.5px;height:290px;border:1px solid #c9c9c9;border-bottom:none;border-radius:3px 3px 0 0"></div>
<div class="btn" style="left:719.5px;top:100px;width:192.5px;height:12.6px;border-radius:3px;background:linear-gradient(#f0f0f0,#d9d9d9 50%,#cbcbcb 51%,#e4e4e4)"></div>
<div class="tx" style="left:725.5px;top:102.2px;font-size:8.68px;color:#111;font-weight:normal;">Network Statistics of galFiltered.sif (undirected)</div>
<div class="a" style="left:653px;top:117.8px;width:334px;height:232px;border-left:1px solid #cfcfcf;border-top:1px solid #cfcfcf;background:#e9e9e9"></div>
<div class="a" style="left:655px;top:121.2px;width:331px;height:12.3px;border:1px solid #8c8c8c;border-right:none;border-radius:4px 0 0 4px;background:linear-gradient(#fdfdfd,#f1f1f1 50%,#e6e6e6 51%,#f4f4f4);overflow:hidden"><div class="a" style="left:13px;top:0;width:178px;height:11px;background:linear-gradient(#d8d8d8,#c9c9c9 50%,#bcbcbc 51%,#d0d0d0)"></div></div>
<svg class="a" style="left:657px;top:123px" width="10" height="9"><path d="M8 1.2l-5 3.1 5 3.1z" fill="#111"/></svg>
<div class="tx" style="left:695.2px;top:123.3px;font-size:8.6px;color:#111;font-weight:normal;">Shortest Path Length Distribution</div>
<div class="tx" style="left:871.5px;top:123.3px;font-size:8.6px;color:#111;font-weight:normal;">Shared Neighbors Distribution</div>
<div class="a" style="left:984.8px;top:117px;width:7px;height:288px;background:#e8e8e8"></div>
<div class="a" style="left:986.9px;top:82px;width:0;height:323px;border-left:1px solid #dadada"></div>
<div class="a" style="left:653.7px;top:136px;width:274.6px;height:213.5px;background:#e2e2e2"></div>
<div class="a" style="left:928.3px;top:136px;width:56.5px;height:213.5px;background:#ececec"></div>
<svg class="a" style="left:0;top:0" width="1000" height="400"><rect x="693" y="143.3" width="228.39999999999998" height="180.2" fill="#fff" stroke="#8d8d8d" stroke-width=".8"/><line x1="694" y1="309.4" x2="920.4" y2="309.4" stroke="#c4c4c4" stroke-width=".6" stroke-dasharray="1.2 1.6"/><line x1="690.5" y1="309.4" x2="693" y2="309.4" stroke="#888" stroke-width=".6"/><line x1="694" y1="295.4" x2="920.4" y2="295.4" stroke="#c4c4c4" stroke-width=".6" stroke-dasharray="1.2 1.6"/><line x1="690.5" y1="295.4" x2="693" y2="295.4" stroke="#888" stroke-width=".6"/><line x1="694" y1="281.5" x2="920.4" y2="281.5" stroke="#c4c4c4" stroke-width=".6" stroke-dasharray="1.2 1.6"/><line x1="690.5" y1="281.5" x2="693" y2="281.5" stroke="#888" stroke-width=".6"/><line x1="694" y1="267.5" x2="920.4" y2="267.5" stroke="#c4c4c4" stroke-width=".6" stroke-dasharray="1.2 1.6"/><line x1="690.5" y1="267.5" x2="693" y2="267.5" stroke="#888" stroke-width=".6"/><line x1="694" y1="253.6" x2="920.4" y2="253.6" stroke="#c4c4c4" stroke-width=".6" stroke-dasharray="1.2 1.6"/><line x1="690.5" y1="253.6" x2="693" y2="253.6" stroke="#888" stroke-width=".6"/><line x1="694" y1="239.6" x2="920.4" y2="239.6" stroke="#c4c4c4" stroke-width=".6" stroke-dasharray="1.2 1.6"/><line x1="690.5" y1="239.6" x2="693" y2="239.6" stroke="#888" stroke-width=".6"/><line x1="694" y1="225.7" x2="920.4" y2="225.7" stroke="#c4c4c4" stroke-width=".6" stroke-dasharray="1.2 1.6"/><line x1="690.5" y1="225.7" x2="693" y2="225.7" stroke="#888" stroke-width=".6"/><line x1="694" y1="211.7" x2="920.4" y2="211.7" stroke="#c4c4c4" stroke-width=".6" stroke-dasharray="1.2 1.6"/><line x1="690.5" y1="211.7" x2="693" y2="211.7" stroke="#888" stroke-width=".6"/><line x1="694" y1="197.8" x2="920.4" y2="197.8" stroke="#c4c4c4" stroke-width=".6" stroke-dasharray="1.2 1.6"/><line x1="690.5" y1="197.8" x2="693" y2="197.8" stroke="#888" stroke-width=".6"/><line x1="694" y1="183.8" x2="920.4" y2="183.8" stroke="#c4c4c4" stroke-width=".6" stroke-dasharray="1.2 1.6"/><line x1="690.5" y1="183.8" x2="693" y2="183.8" stroke="#888" stroke-width=".6"/><line x1="694" y1="169.9" x2="920.4" y2="169.9" stroke="#c4c4c4" stroke-width=".6" stroke-dasharray="1.2 1.6"/><line x1="690.5" y1="169.9" x2="693" y2="169.9" stroke="#888" stroke-width=".6"/><line x1="694" y1="155.9" x2="920.4" y2="155.9" stroke="#c4c4c4" stroke-width=".6" stroke-dasharray="1.2 1.6"/><line x1="690.5" y1="155.9" x2="693" y2="155.9" stroke="#888" stroke-width=".6"/><rect x="698.43" y="304.41" width="7.6" height="18.89" fill="#8c8c8c"/><rect x="697.33" y="303.21" width="7.0" height="19.89" fill="#000"/><rect x="706.36" y="278.19" width="7.6" height="45.11" fill="#8c8c8c"/><rect x="705.26" y="276.99" width="7.0" height="46.11" fill="#000"/><rect x="714.29" y="268.70" width="7.6" height="54.60" fill="#8c8c8c"/><rect x="713.19" y="267.50" width="7.0" height="55.60" fill="#000"/><rect x="722.22" y="224.90" width="7.6" height="98.40" fill="#8c8c8c"/><rect x="721.12" y="223.70" width="7.0" height="99.40" fill="#000"/><rect x="730.15" y="199.79" width="7.6" height="123.51" fill="#8c8c8c"/><rect x="729.05" y="198.59" width="7.0" height="124.51" fill="#000"/><rect x="738.08" y="169.10" width="7.6" height="154.20" fill="#8c8c8c"/><rect x="736.98" y="167.90" width="7.0" height="155.20" fill="#000"/><rect x="746.01" y="162.96" width="7.6" height="160.34" fill="#8c8c8c"/><rect x="744.91" y="161.76" width="7.0" height="161.34" fill="#000"/><rect x="753.94" y="152.92" width="7.6" height="170.38" fill="#8c8c8c"/><rect x="752.84" y="151.72" width="7.0" height="171.38" fill="#000"/><rect x="761.87" y="162.40" width="7.6" height="160.90" fill="#8c8c8c"/><rect x="760.77" y="161.20" width="7.0" height="161.90" fill="#000"/><rect x="769.80" y="171.33" width="7.6" height="151.97" fill="#8c8c8c"/><rect x="768.70" y="170.13" width="7.0" height="152.97" fill="#000"/><rect x="777.73" y="193.09" width="7.6" height="130.21" fill="#8c8c8c"/><rect x="776.63" y="191.89" width="7.0" height="131.21" fill="#000"/><rect x="785.66" y="208.16" width="7.6" height="115.14" fill="#8c8c8c"/><rect x="784.56" y="206.96" width="7.0" height="116.14" fill="#000"/><rect x="793.59" y="236.62" width="7.6" height="86.68" fill="#8c8c8c"/><rect x="792.49" y="235.42" width="7.0" height="87.68" fill="#000"/><rect x="801.52" y="253.91" width="7.6" height="69.39" fill="#8c8c8c"/><rect x="800.42" y="252.71" width="7.0" height="70.39" fill="#000"/><rect x="809.45" y="270.65" width="7.6" height="52.65" fill="#8c8c8c"/><rect x="808.35" y="269.45" width="7.0" height="53.65" fill="#000"/><rect x="817.38" y="287.39" width="7.6" height="35.91" fill="#8c8c8c"/><rect x="816.28" y="286.19" width="7.0" height="36.91" fill="#000"/><rect x="825.31" y="297.44" width="7.6" height="25.86" fill="#8c8c8c"/><rect x="824.21" y="296.24" width="7.0" height="26.86" fill="#000"/><rect x="833.24" y="306.64" width="7.6" height="16.66" fill="#8c8c8c"/><rect x="832.14" y="305.44" width="7.0" height="17.66" fill="#000"/><rect x="841.17" y="312.78" width="7.6" height="10.52" fill="#8c8c8c"/><rect x="840.07" y="311.58" width="7.0" height="11.52" fill="#000"/><rect x="849.10" y="316.97" width="7.6" height="6.33" fill="#8c8c8c"/><rect x="848.00" y="315.77" width="7.0" height="7.33" fill="#000"/><rect x="857.03" y="319.20" width="7.6" height="4.10" fill="#8c8c8c"/><rect x="855.93" y="318.00" width="7.0" height="5.10" fill="#000"/><rect x="864.96" y="320.87" width="7.6" height="2.43" fill="#8c8c8c"/><rect x="863.86" y="319.67" width="7.0" height="3.43" fill="#000"/><rect x="872.89" y="322.13" width="7.6" height="1.17" fill="#8c8c8c"/><rect x="871.79" y="320.93" width="7.0" height="2.17" fill="#000"/><rect x="880.82" y="322.97" width="7.6" height="0.33" fill="#8c8c8c"/><rect x="879.72" y="321.77" width="7.0" height="1.33" fill="#000"/><rect x="888.75" y="323.52" width="7.6" height="-0.22" fill="#8c8c8c"/><rect x="887.65" y="322.32" width="7.0" height="0.78" fill="#000"/><rect x="896.68" y="324.00" width="7.6" height="-0.70" fill="#8c8c8c"/><rect x="895.58" y="322.80" width="7.0" height="0.30" fill="#000"/><rect x="904.61" y="324.22" width="7.6" height="-0.92" fill="#8c8c8c"/><rect x="903.51" y="323.02" width="7.0" height="0.08" fill="#000"/><rect x="912.54" y="324.39" width="7.6" height="-1.09" fill="#8c8c8c"/><rect x="911.44" y="323.19" width="7.0" height="-0.09" fill="#000"/><line x1="693" y1="326.3" x2="921.4" y2="326.3" stroke="#9a9a9a" stroke-width=".8"/><line x1="693.5" y1="326.3" x2="693.5" y2="328.3" stroke="#888" stroke-width=".6"/><text x="693.5" y="335.2" font-size="6.6" text-anchor="middle" font-family="Liberation Sans" fill="#333">0</text><line x1="709.4" y1="326.3" x2="709.4" y2="328.3" stroke="#888" stroke-width=".6"/><text x="709.4" y="335.2" font-size="6.6" text-anchor="middle" font-family="Liberation Sans" fill="#333">2</text><line x1="725.2" y1="326.3" x2="725.2" y2="328.3" stroke="#888" stroke-width=".6"/><text x="725.2" y="335.2" font-size="6.6" text-anchor="middle" font-family="Liberation Sans" fill="#333">4</text><line x1="741.1" y1="326.3" x2="741.1" y2="328.3" stroke="#888" stroke-width=".6"/><text x="741.1" y="335.2" font-size="6.6" text-anchor="middle" font-family="Liberation Sans" fill="#333">6</text><line x1="756.9" y1="326.3" x2="756.9" y2="328.3" stroke="#888" stroke-width=".6"/><text x="756.9" y="335.2" font-size="6.6" text-anchor="middle" font-family="Liberation Sans" fill="#333">8</text><line x1="772.8" y1="326.3" x2="772.8" y2="328.3" stroke="#888" stroke-width=".6"/><text x="772.8" y="335.2" font-size="6.6" text-anchor="middle" font-family="Liberation Sans" fill="#333">10</text><line x1="788.7" y1="326.3" x2="788.7" y2="328.3" stroke="#888" stroke-width=".6"/><text x="788.7" y="335.2" font-size="6.6" text-anchor="middle" font-family="Liberation Sans" fill="#333">12</text><line x1="804.5" y1="326.3" x2="804.5" y2="328.3" stroke="#888" stroke-width=".6"/><text x="804.5" y="335.2" font-size="6.6" text-anchor="middle" font-family="Liberation Sans" fill="#333">14</text><line x1="820.4" y1="326.3" x2="820.4" y2="328.3" stroke="#888" stroke-width=".6"/><text x="820.4" y="335.2" font-size="6.6" text-anchor="middle" font-family="Liberation Sans" fill="#333">16</text><line x1="836.2" y1="326.3" x2="836.2" y2="328.3" stroke="#888" stroke-width=".6"/><text x="836.2" y="335.2" font-size="6.6" text-anchor="middle" font-family="Liberation Sans" fill="#333">18</text><line x1="852.1" y1="326.3" x2="852.1" y2="328.3" stroke="#888" stroke-width=".6"/><text x="852.1" y="335.2" font-size="6.6" text-anchor="middle" font-family="Liberation Sans" fill="#333">20</text><line x1="868.0" y1="326.3" x2="868.0" y2="328.3" stroke="#888" stroke-width=".6"/><text x="868.0" y="335.2" font-size="6.6" text-anchor="middle" font-family="Liberation Sans" fill="#333">22</text><line x1="883.8" y1="326.3" x2="883.8" y2="328.3" stroke="#888" stroke-width=".6"/><text x="883.8" y="335.2" font-size="6.6" text-anchor="middle" font-family="Liberation Sans" fill="#333">24</text><line x1="899.7" y1="326.3" x2="899.7" y2="328.3" stroke="#888" stroke-width=".6"/><text x="899.7" y="335.2" font-size="6.6" text-anchor="middle" font-family="Liberation Sans" fill="#333">26</text><line x1="915.5" y1="326.3" x2="915.5" y2="328.3" stroke="#888" stroke-width=".6"/><text x="915.5" y="335.2" font-size="6.6" text-anchor="middle" font-family="Liberation Sans" fill="#333">28</text><text x="687.5" y="325.4" font-size="6.6" text-anchor="end" font-family="Liberation Sans" fill="#333">0</text><text x="687.5" y="311.5" font-size="6.6" text-anchor="end" font-family="Liberation Sans" fill="#333">500</text><text x="687.5" y="297.5" font-size="6.6" text-anchor="end" font-family="Liberation Sans" fill="#333">1000</text><text x="687.5" y="283.6" font-size="6.6" text-anchor="end" font-family="Liberation Sans" fill="#333">1500</text><text x="687.5" y="269.6" font-size="6.6" text-anchor="end" font-family="Liberation Sans" fill="#333">2000</text><text x="687.5" y="255.7" font-size="6.6" text-anchor="end" font-family="Liberation Sans" fill="#333">2500</text><text x="687.5" y="241.7" font-size="6.6" text-anchor="end" font-family="Liberation Sans" fill="#333">3000</text><text x="687.5" y="227.8" font-size="6.6" text-anchor="end" font-family="Liberation Sans" fill="#333">3500</text><text x="687.5" y="213.8" font-size="6.6" text-anchor="end" font-family="Liberation Sans" fill="#333">4000</text><text x="687.5" y="199.9" font-size="6.6" text-anchor="end" font-family="Liberation Sans" fill="#333">4500</text><text x="687.5" y="185.9" font-size="6.6" text-anchor="end" font-family="Liberation Sans" fill="#333">5000</text><text x="687.5" y="172.0" font-size="6.6" text-anchor="end" font-family="Liberation Sans" fill="#333">5500</text><text x="687.5" y="158.0" font-size="6.6" text-anchor="end" font-family="Liberation Sans" fill="#333">6000</text><text x="807.2" y="343.6" font-size="7.6" text-anchor="middle" font-family="Liberation Sans" fill="#222">Path length</text><text transform="translate(668.3 233.2) rotate(-90)" font-size="7.4" text-anchor="middle" font-family="Liberation Sans" fill="#222">Frequency</text></svg>
<div class="a" style="left:932.2px;top:138px;width:52.6px;height:96px;overflow:hidden">
<div class="btn" style="left:0;top:2.6999999999999886px;width:70px;height:12.5px;border-radius:7px"></div>
<div class="tx" style="left:18.799999999999955px;top:4.9999999999999885px;font-size:8.6px;color:#111">Chart Settings</div>
<div class="btn" style="left:0;top:19.80000000000001px;width:70px;height:12.5px;border-radius:7px"></div>
<div class="tx" style="left:20.0px;top:22.100000000000012px;font-size:8.6px;color:#111">Enlarge Chart</div>
<div class="btn" style="left:0;top:37.19999999999999px;width:70px;height:12.5px;border-radius:7px"></div>
<div class="tx" style="left:18.799999999999955px;top:39.499999999999986px;font-size:8.6px;color:#111">Change Format</div>
<div class="btn" style="left:0;top:62px;width:70px;height:12.5px;border-radius:7px"></div>
<div class="tx" style="left:21.299999999999955px;top:64.3px;font-size:8.6px;color:#111">Export Chart</div>
<div class="btn" style="left:0;top:79.4px;width:70px;height:12.5px;border-radius:7px"></div>
<div class="tx" style="left:22.299999999999955px;top:81.7px;font-size:8.6px;color:#111">Export Data</div>
</div>
<div class="btn" style="left:698.3px;top:363.2px;width:97.60000000000002px;height:12.6px;border-radius:7px"></div>
<div class="tx" style="left:719.9px;top:366px;font-size:8.2px;color:#000;font-weight:normal;">Save Statistics</div>
<div class="btn" style="left:817px;top:363.2px;width:97.70000000000005px;height:12.6px;border-radius:7px"></div>
<div class="tx" style="left:827.2px;top:366px;font-size:8.2px;color:#000;font-weight:normal;">Visualize Parameters</div>
<div class="btn" style="left:925px;top:363.2px;width:57px;height:12.6px;border-radius:7px"></div>
<div class="tx" style="left:935.2px;top:366px;font-size:8.2px;color:#000;font-weight:normal;">Close Tab</div>
<div class="a" style="left:648px;top:387.3px;width:336px;height:10.2px;border:1px solid #c4c4c4;background:linear-gradient(#e4e4e4,#fafafa)"></div>
<div class="a" style="left:649px;top:388px;width:275.5px;height:8.8px;border:1px solid #8f8f8f;border-radius:5px;background:linear-gradient(#fdfdfd,#e9e9e9 50%,#dedede 51%,#f4f4f4)"></div>
<div class="a" style="left:963px;top:388px;width:0;height:9px;border-left:1px solid #c9c9c9"></div>
<svg class="a" style="left:964px;top:388px" width="20" height="9"><path d="M6 2l-3.2 2.5 3.2 2.5z" fill="#222"/><path d="M13.5 2l3.2 2.5-3.2 2.5z" fill="#222"/></svg>
<div class="a" style="left:398px;top:452px;width:598.2px;height:124.39999999999998px;background:#e8e8e8;border-radius:4px 4px 0 0;box-shadow:0 5px 10px rgba(0,0,0,.45),1px 0 1px rgba(0,0,0,.12),-1px 0 1px rgba(0,0,0,.12)"></div>
<div class="a tb" style="left:398px;top:452px;width:598.2px;height:12.3px;border-radius:4px 4px 0 0"></div>
<div class="tl" style="left:402.7px;top:454.0px;width:8.6px;height:8.6px"></div>
<div class="tl" style="left:415.5px;top:454.0px;width:8.6px;height:8.6px"></div>
<div class="tl" style="left:428.2px;top:454.0px;width:8.6px;height:8.6px"></div>
<div class="tx" style="left:675px;top:455.2px;font-size:8.2px;color:#4d4d4d;font-weight:normal;">Table Panel</div>
<div class="a" style="left:398px;top:464.3px;width:598.2px;height:17.2px;background:#e2e2e2"></div>
<svg class="a" style="left:969px;top:469px" width="24" height="11"><path d="M2.5 2.3h4.6l-.6 1 .5 2.6 1.3 1.2h-7l1.3-1.2.5-2.6z" fill="#111"/><path d="M4.8 7v3" stroke="#111" stroke-width="1"/><path d="M14 3.2l4.4 4.4M18.4 3.2l-4.4 4.4" stroke="#111" stroke-width="1.6"/></svg>
<div class="a" style="left:403.6px;top:486.4px;width:586.9px;height:77.6px;border:1px solid #c8c8c8;border-radius:3px;background:#e9e9e9"></div>
<svg class="a" style="left:400px;top:490px" width="200" height="20"><polygon points="22.40,11.40 20.73,12.78 20.94,14.94 18.78,14.73 17.40,16.40 16.02,14.73 13.86,14.94 14.07,12.78 12.40,11.40 14.07,10.02 13.86,7.86 16.02,8.07 17.40,6.40 18.78,8.07 20.94,7.86 20.73,10.02" fill="#111"/><circle cx="17.4" cy="11.4" r="1.2" fill="#e9e9e9"/><rect x="34.5" y="6" width="11.5" height="10.5" rx="1.2" fill="#fff" stroke="#222" stroke-width="1.3"/><line x1="40.2" y1="6" x2="40.2" y2="16.5" stroke="#222" stroke-width="1.3"/><rect x="56.3" y="8.6" width="5" height="5" fill="#fff" stroke="#444" stroke-width=".8"/><rect x="63.3" y="8.6" width="5" height="5" fill="#fff" stroke="#444" stroke-width=".8"/><path d="M57.3 10.8l1.3 1.4 2.8-3.6M64.3 10.8l1.3 1.4 2.8-3.6" stroke="#111" stroke-width=".9" fill="none"/><rect x="80.3" y="8.6" width="5" height="5" rx="1" fill="#fff" stroke="#555" stroke-width=".8"/><rect x="87.3" y="8.6" width="5" height="5" rx="1" fill="#fff" stroke="#555" stroke-width=".8"/><path d="M104.5 5.8h6l3.3 3.3v7.7h-9.3z" fill="#fff" stroke="#222" stroke-width="1.1"/><path d="M110.5 5.8v3.3h3.3" fill="none" stroke="#222" stroke-width=".9"/><path d="M128 7.8h9M131 7.8v-1.5h3v1.5" stroke="#222" stroke-width="1" fill="none"/><path d="M128.6 8.8h7.8l-.6 8h-6.6z" fill="#fff" stroke="#222" stroke-width="1.1"/><path d="M130.9 10v5.6M132.5 10v5.6M134.1 10v5.6" stroke="#333" stroke-width=".6"/><rect x="149" y="9" width="7" height="4.5" fill="#c8c8c8" stroke="#a0a0a0" stroke-width=".6"/><circle cx="158.5" cy="11.3" r="2.3" fill="#fff" stroke="#9a9a9a" stroke-width="1.1"/><text x="169" y="15.2" font-family="Liberation Serif" font-style="italic" font-size="10.5" fill="#9a9a9a">f(x)</text></svg>
<div class="a" style="left:596.9px;top:494.4px;width:235.3px;height:13.1px;border:1px solid #8f8f8f;border-radius:4px;background:linear-gradient(#ffffff,#f1f1f1 50%,#e6e6e6 51%,#f6f6f6)"></div>
<div class="tx" style="left:601.8px;top:496.8px;font-size:8.7px;color:#111;font-weight:normal;">galFiltered.sif</div>
<div class="a" style="left:821px;top:495px;width:0;height:12px;border-left:1px solid #c6c6c6"></div>
<svg class="a" style="left:822px;top:495px" width="10" height="12"><path d="M3 5l2-2.3 2 2.3zM3 7l2 2.3 2-2.3z" fill="#222"/></svg>
<div class="a" style="left:406px;top:513.8px;width:583px;height:41.6px;background:#fff"></div>
<div class="a" style="left:406px;top:513.8px;width:574px;height:32.7px;overflow:hidden">
<div class="a" style="left:0;top:0;width:600px;height:14.4px;background:linear-gradient(#f3f3f3,#e6e6e6);border-bottom:1px solid #c2c2c2"></div>
<div class="a" style="left:0;top:0;width:45.6px;height:14.4px;background:linear-gradient(#c9e6f6,#b7dbef);border-bottom:1px solid #a9c9dc"></div>
<div class="a" style="left:45.10000000000002px;top:0;width:0;height:14.4px;border-left:1px solid #c4c4c4"></div>
<div class="tx" style="left:0px;top:3.6px;width:43.00000000000002px;text-align:right;font-size:8.1px;color:#222">shared...</div>
<div class="tx" style="left:4.8px;top:15.5px;font-size:7.75px;color:#111;letter-spacing:.1px">YKR026C</div>
<div class="tx" style="left:4.8px;top:24.7px;font-size:7.75px;color:#111;letter-spacing:.1px">YGL122C</div>
<div class="a" style="left:89.89999999999998px;top:0;width:0;height:14.4px;border-left:1px solid #c4c4c4"></div>
<div class="tx" style="left:45.60000000000002px;top:3.6px;width:35.99999999999996px;text-align:right;font-size:8.1px;color:#222">name</div>
<div class="tx" style="left:50.40000000000002px;top:15.5px;font-size:7.75px;color:#111;letter-spacing:.1px">YKR026C</div>
<div class="tx" style="left:50.40000000000002px;top:24.7px;font-size:7.75px;color:#111;letter-spacing:.1px">YGL122C</div>
<div class="a" style="left:135.0px;top:0;width:0;height:14.4px;border-left:1px solid #c4c4c4"></div>
<div class="tx" style="left:90.39999999999998px;top:3.6px;width:42.50000000000002px;text-align:right;font-size:8.1px;color:#222">Averag...</div>
<div class="tx" style="left:90.39999999999998px;top:15.2px;width:39.90000000000002px;text-align:right;font-size:8.3px;color:#111;letter-spacing:.15px">15.370...</div>
<div class="tx" style="left:90.39999999999998px;top:24.4px;width:39.90000000000002px;text-align:right;font-size:8.3px;color:#111;letter-spacing:.15px">14.375</div>
<div class="a" style="left:180.0px;top:0;width:0;height:14.4px;border-left:1px solid #c4c4c4"></div>
<div class="tx" style="left:135.5px;top:3.6px;width:42.4px;text-align:right;font-size:8.1px;color:#222">Cluster...</div>
<div class="tx" style="left:135.5px;top:15.2px;width:39.8px;text-align:right;font-size:8.3px;color:#111;letter-spacing:.15px">0.0</div>
<div class="tx" style="left:135.5px;top:24.4px;width:39.8px;text-align:right;font-size:8.3px;color:#111;letter-spacing:.15px">0.0</div>
<div class="a" style="left:225.79999999999995px;top:0;width:0;height:14.4px;border-left:1px solid #c4c4c4"></div>
<div class="tx" style="left:180.5px;top:3.6px;width:43.19999999999995px;text-align:right;font-size:8.1px;color:#222">Closen...</div>
<div class="tx" style="left:180.5px;top:15.2px;width:40.59999999999995px;text-align:right;font-size:8.3px;color:#111;letter-spacing:.15px">0.0650...</div>
<div class="tx" style="left:180.5px;top:24.4px;width:40.59999999999995px;text-align:right;font-size:8.3px;color:#111;letter-spacing:.15px">0.0695...</div>
<div class="a" style="left:270.6px;top:0;width:0;height:14.4px;border-left:1px solid #c4c4c4"></div>
<div class="tx" style="left:226.29999999999995px;top:3.6px;width:42.20000000000007px;text-align:right;font-size:8.1px;color:#222">IsSingl...</div>
<div class="tx" style="left:226.29999999999995px;top:15.2px;width:44.80000000000007px;text-align:center;font-size:8.3px;color:#111">false</div>
<div class="tx" style="left:226.29999999999995px;top:24.4px;width:44.80000000000007px;text-align:center;font-size:8.3px;color:#111">false</div>
<div class="a" style="left:316.5px;top:0;width:0;height:14.4px;border-left:1px solid #c4c4c4"></div>
<div class="tx" style="left:271.1px;top:3.6px;width:43.299999999999976px;text-align:right;font-size:8.1px;color:#222">Partne...</div>
<div class="tx" style="left:271.1px;top:15.2px;width:40.699999999999974px;text-align:right;font-size:8.3px;color:#111;letter-spacing:.15px">0</div>
<div class="tx" style="left:271.1px;top:24.4px;width:40.699999999999974px;text-align:right;font-size:8.3px;color:#111;letter-spacing:.15px">0</div>
<div class="a" style="left:361.1px;top:0;width:0;height:14.4px;border-left:1px solid #c4c4c4"></div>
<div class="tx" style="left:317px;top:3.6px;width:42.00000000000002px;text-align:right;font-size:8.1px;color:#222">SelfLoo...</div>
<div class="tx" style="left:317px;top:15.2px;width:39.40000000000002px;text-align:right;font-size:8.3px;color:#111;letter-spacing:.15px">0</div>
<div class="tx" style="left:317px;top:24.4px;width:39.40000000000002px;text-align:right;font-size:8.3px;color:#111;letter-spacing:.15px">0</div>
<div class="a" style="left:406.79999999999995px;top:0;width:0;height:14.4px;border-left:1px solid #c4c4c4"></div>
<div class="tx" style="left:361.6px;top:3.6px;width:43.09999999999993px;text-align:right;font-size:8.1px;color:#222">Eccent...</div>
<div class="tx" style="left:361.6px;top:15.2px;width:40.49999999999993px;text-align:right;font-size:8.3px;color:#111;letter-spacing:.15px">26</div>
<div class="tx" style="left:361.6px;top:24.4px;width:40.49999999999993px;text-align:right;font-size:8.3px;color:#111;letter-spacing:.15px">25</div>
<div class="a" style="left:451.70000000000005px;top:0;width:0;height:14.4px;border-left:1px solid #c4c4c4"></div>
<div class="tx" style="left:407.29999999999995px;top:3.6px;width:36.100000000000094px;text-align:right;font-size:8.1px;color:#222">Stress</div>
<div class="tx" style="left:407.29999999999995px;top:15.2px;width:39.70000000000009px;text-align:right;font-size:8.3px;color:#111;letter-spacing:.15px">0</div>
<div class="tx" style="left:407.29999999999995px;top:24.4px;width:39.70000000000009px;text-align:right;font-size:8.3px;color:#111;letter-spacing:.15px">5902</div>
<div class="a" style="left:496.79999999999995px;top:0;width:0;height:14.4px;border-left:1px solid #c4c4c4"></div>
<div class="tx" style="left:452.20000000000005px;top:3.6px;width:36.29999999999991px;text-align:right;font-size:8.1px;color:#222">Degree</div>
<div class="tx" style="left:452.20000000000005px;top:15.2px;width:39.899999999999906px;text-align:right;font-size:8.3px;color:#111;letter-spacing:.15px">1</div>
<div class="tx" style="left:452.20000000000005px;top:24.4px;width:39.899999999999906px;text-align:right;font-size:8.3px;color:#111;letter-spacing:.15px">3</div>
<div class="a" style="left:541.6px;top:0;width:0;height:14.4px;border-left:1px solid #c4c4c4"></div>
<div class="tx" style="left:497.29999999999995px;top:3.6px;width:42.20000000000007px;text-align:right;font-size:8.1px;color:#222">Betwee...</div>
<div class="tx" style="left:497.29999999999995px;top:15.2px;width:39.600000000000065px;text-align:right;font-size:8.3px;color:#111;letter-spacing:.15px">0.0</div>
<div class="tx" style="left:497.29999999999995px;top:24.4px;width:39.600000000000065px;text-align:right;font-size:8.3px;color:#111;letter-spacing:.15px">0.0240...</div>
<div class="a" style="left:586.5px;top:0;width:0;height:14.4px;border-left:1px solid #c4c4c4"></div>
<div class="tx" style="left:554px;top:3.6px;font-size:8.1px;color:#222">Neigh</div>
<div class="tx" style="left:573px;top:15.2px;font-size:8.3px;color:#111;letter-spacing:.15px">3</div>
<div class="tx" style="left:549.3px;top:24.4px;font-size:8.3px;color:#111;letter-spacing:.15px">1.6666...</div>
</div>
<div class="a" style="left:980.1px;top:528.2px;width:8.8px;height:18.5px;background:linear-gradient(90deg,#e6e6e6,#fafafa)"></div>
<div class="a" style="left:980.5px;top:531.9px;width:8px;height:12.9px;border:1px solid #8f8f8f;border-radius:4px;background:linear-gradient(90deg,#fdfdfd,#e2e2e2)"></div>
<div class="a" style="left:406px;top:547.1px;width:573.6px;height:8.1px;border:1px solid #c7c7c7;background:linear-gradient(#e4e4e4,#fafafa)"></div>
<div class="a" style="left:407px;top:547.4px;width:411.5px;height:7.6px;border:1px solid #8f8f8f;border-radius:4px;background:linear-gradient(#fdfdfd,#e9e9e9 50%,#dedede 51%,#f4f4f4)"></div>
<div class="a" style="left:959.5px;top:547.5px;width:0;height:7.5px;border-left:1px solid #cfcfcf"></div>
<div class="a" style="left:969.8px;top:547.5px;width:0;height:7.5px;border-left:1px solid #cfcfcf"></div>
<svg class="a" style="left:960px;top:547px" width="20" height="9"><path d="M6 2.3l-3 2.2 3 2.2z" fill="#222"/><path d="M13.5 2.3l3 2.2-3 2.2z" fill="#222"/></svg>
<div class="a" style="left:608.5px;top:560.9px;width:177.4px;height:12.2px;border:1px solid #8c8c8c;border-radius:4px;background:linear-gradient(#fdfdfd,#f1f1f1 50%,#e6e6e6 51%,#f4f4f4);overflow:hidden"><div class="a" style="left:0;top:0;width:54.9px;height:11px;background:linear-gradient(#d8d8d8,#c9c9c9 50%,#bcbcbc 51%,#d0d0d0)"></div><div class="a" style="left:109.8px;top:0;width:0;height:11px;border-left:1px solid #b5b5b5"></div></div>
<div class="tx" style="left:614.6px;top:563.2px;font-size:8.35px;color:#111;font-weight:normal;">Node Table</div>
<div class="tx" style="left:669.5px;top:563.2px;font-size:8.35px;color:#111;font-weight:normal;">Edge Table</div>
<div class="tx" style="left:725.5px;top:563.2px;font-size:8.7px;color:#111;font-weight:normal;">Network Table</div>
</body></html>
